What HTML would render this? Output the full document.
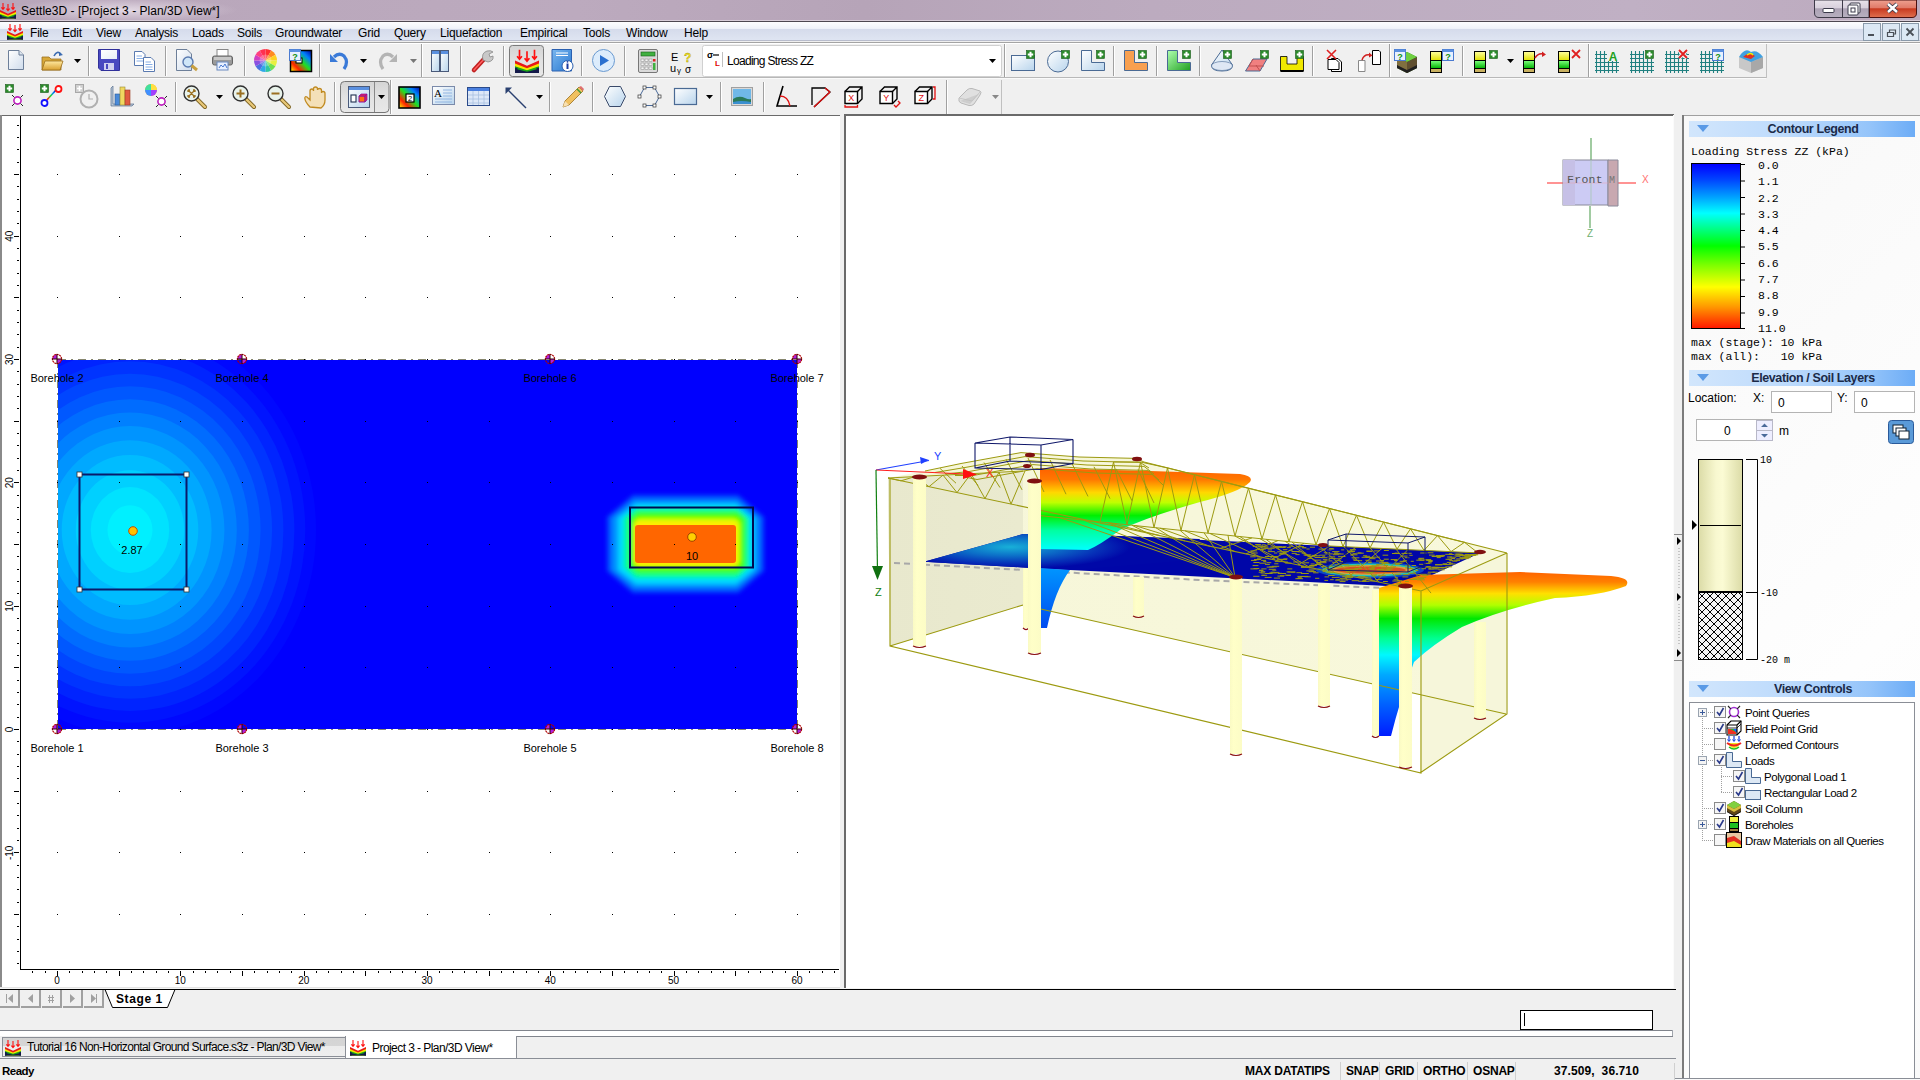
<!DOCTYPE html>
<html><head><meta charset="utf-8">
<style>
html,body{margin:0;padding:0;width:1920px;height:1080px;overflow:hidden;background:#f0f0f0;font-family:"Liberation Sans",sans-serif;font-size:12px;color:#000}
.a{position:absolute}
#title{left:0;top:0;width:1920px;height:21px;background:linear-gradient(90deg,#b8a6ba 0%,#bcaabe 30%,#b6a4b8 45%,#bcabbf 60%,#c0b0c4 85%,#bcaabe 100%)}
#menu{left:0;top:22px;width:1920px;height:18px;background:linear-gradient(#fdfdfe 0%,#f0f3f9 36%,#d5dbeb 38%,#dfe5f2 100%)}
.mi{position:absolute;top:26px;font-size:12px;letter-spacing:-0.2px;color:#000}
#tb{left:0;top:44px;width:1920px;height:71px;background:#f0f0f0}
.sep{position:absolute;width:1px;background:#a8a8a8;border-right:1px solid #fff}
.view{position:absolute;background:#fff;overflow:hidden}
svg text{font-family:"Liberation Sans",sans-serif}
.hdr{left:1689px;width:226px;height:16px;background:linear-gradient(90deg,#d2e6fc 0%,#bcdafc 45%,#94c4fa 80%,#6cacf6 100%);font-weight:bold;font-size:12.5px;color:#1b2a48;text-align:center;line-height:16px;text-indent:22px;letter-spacing:-0.4px}
.hdr::before{content:"";position:absolute;left:8px;top:4px;border-left:6px solid transparent;border-right:6px solid transparent;border-top:7px solid #5a9ae6}
.mono{font-family:"Liberation Mono",monospace;font-size:11.5px;line-height:14px;white-space:pre}
.mono2{font-family:"Liberation Mono",monospace;font-size:10px;line-height:12px}
.inp{background:#fff;border:1px solid #b4b4b4;box-sizing:border-box;font-size:12px}
.inp span{position:absolute;top:4px}
</style></head><body>
<!-- title bar -->
<div id="title" class="a"></div>
<div class="a" style="left:0;top:20px;width:1920px;height:1px;background:#d8cdd8"></div><div class="a" style="left:0;top:21px;width:1920px;height:1px;background:#4e4850"></div><div class="a" style="left:8px;top:0;width:230px;height:20px;background:radial-gradient(ellipse 50% 60% at 50% 50%,rgba(240,232,240,.75),rgba(240,232,240,0))"></div>
<div class="a" style="left:21px;top:4px;font-size:12px;letter-spacing:0.02px">Settle3D - [Project 3 - Plan/3D View*]</div>
<!-- menu -->
<div id="menu" class="a"></div>
<div class="a" style="left:0;top:40px;width:1920px;height:1px;background:#b8bccc"></div><div class="a" style="left:0;top:41px;width:1920px;height:1px;background:#efefef"></div><div class="a" style="left:0;top:42px;width:1920px;height:1px;background:#a4a4a4"></div><div class="a" style="left:0;top:43px;width:1920px;height:1px;background:#fff"></div>
<div class="mi" style="left:30px">File</div>
<div class="mi" style="left:62px">Edit</div>
<div class="mi" style="left:96px">View</div>
<div class="mi" style="left:135px">Analysis</div>
<div class="mi" style="left:192px">Loads</div>
<div class="mi" style="left:237px">Soils</div>
<div class="mi" style="left:275px">Groundwater</div>
<div class="mi" style="left:358px">Grid</div>
<div class="mi" style="left:394px">Query</div>
<div class="mi" style="left:440px">Liquefaction</div>
<div class="mi" style="left:520px">Empirical</div>
<div class="mi" style="left:583px">Tools</div>
<div class="mi" style="left:626px">Window</div>
<div class="mi" style="left:684px">Help</div>
<!-- toolbars -->
<div id="tb" class="a"></div>
<svg class="a" style="left:0;top:43px" width="1920" height="72" viewBox="0 43 1920 72">
<defs>
<linearGradient id="gpage" x1="0" y1="0" x2="1" y2="1"><stop offset="0" stop-color="#fff"/><stop offset="1" stop-color="#cfdcec"/></linearGradient>
<linearGradient id="gfold" x1="0" y1="0" x2="0" y2="1"><stop offset="0" stop-color="#ffe9a0"/><stop offset="1" stop-color="#d9a030"/></linearGradient>
<linearGradient id="gbtn" x1="0" y1="0" x2="0" y2="1"><stop offset="0" stop-color="#d4d4d4"/><stop offset="0.5" stop-color="#e2e2e2"/><stop offset="1" stop-color="#e8e8e8"/></linearGradient>
<linearGradient id="gcont" x1="0" y1="1" x2="1" y2="0"><stop offset="0" stop-color="#ffff00"/><stop offset="0.25" stop-color="#ff2000"/><stop offset="0.5" stop-color="#20e020"/><stop offset="0.75" stop-color="#0080ff"/><stop offset="1" stop-color="#0000a0"/></linearGradient>
<linearGradient id="gblue" x1="0" y1="0" x2="1" y2="1"><stop offset="0" stop-color="#7ab8f0"/><stop offset="1" stop-color="#2a78d0"/></linearGradient>
<linearGradient id="gyel" x1="0" y1="0" x2="0" y2="1"><stop offset="0" stop-color="#ffffa0"/><stop offset="1" stop-color="#e0e000"/></linearGradient>
<linearGradient id="ggrn" x1="0" y1="0" x2="0" y2="1"><stop offset="0" stop-color="#80ff80"/><stop offset="1" stop-color="#00b000"/></linearGradient>
<linearGradient id="glt" x1="0" y1="0" x2="1" y2="1"><stop offset="0" stop-color="#ffffff"/><stop offset="1" stop-color="#b8d4ec"/></linearGradient>
<linearGradient id="ggl" x1="0" y1="0" x2="1" y2="1"><stop offset="0" stop-color="#b0ffb0"/><stop offset="1" stop-color="#20a020"/></linearGradient>
<symbol id="s3d" viewBox="0 0 16 16">
<path d="M0 7.6L8 11.2L16 7.6V16H0Z" fill="#e81818"/>
<path d="M0 9.6L8 12.9L16 9.6V16H0Z" fill="#f4e800"/>
<path d="M0 11.5L8 14.2L16 11.5V16H0Z" fill="#18a818"/>
<path d="M0 13.2L8 15.2L16 13.2V16H0Z" fill="#141a4a"/>
<rect x="0" y="12.5" width="1.6" height="3.5" fill="#141a4a"/><rect x="14.4" y="12.5" width="1.6" height="3.5" fill="#141a4a"/>
<path d="M3 0.5V6.5M1.4 4.8L3 6.8L4.6 4.8M8 1.5V8M6.4 6.2L8 8.2L9.6 6.2M13 0.5V6.5M11.4 4.8L13 6.8L14.6 4.8" stroke="#ff1010" stroke-width="1.1" fill="none"/>
</symbol>
<symbol id="plus" viewBox="0 0 9 9"><rect x="0.5" y="0.5" width="8" height="8" fill="#2a8a2a" stroke="#1a5a1a" stroke-width="0.6"/><path d="M4.5 1.8V7.2M1.8 4.5H7.2" stroke="#fff" stroke-width="2"/></symbol>
<symbol id="qbadge" viewBox="0 0 12 12"><rect x="0.5" y="0.5" width="11" height="11" fill="#e8f0ff" stroke="#4a7ad0"/><rect x="0.5" y="0.5" width="11" height="2.5" fill="#5a90e0"/><text x="6" y="10.5" font-size="9" font-weight="bold" fill="#109010" text-anchor="middle">?</text></symbol>
<symbol id="bh" viewBox="0 0 12 22"><rect x="0.5" y="0.5" width="11" height="9" fill="url(#gyel)" stroke="#000"/><rect x="0.5" y="9.5" width="11" height="8" fill="url(#ggrn)" stroke="#000"/><rect x="0.5" y="17.5" width="11" height="4" fill="#c8b060" stroke="#000"/></symbol>
<pattern id="grid" width="4" height="4" patternUnits="userSpaceOnUse"><path d="M1.5 0V4M0 1.5H4" stroke="#208080" stroke-width="1.1"/></pattern>
</defs>
<rect x="0" y="77" width="1766" height="1" fill="#b8b8b8"/><rect x="0" y="78" width="1766" height="1" fill="#fafafa"/>
<g transform="translate(8,50)"><path d="M0.5 0.5H11L15.5 5V19.5H0.5Z" fill="url(#gpage)" stroke="#6d7f99"/><path d="M11 0.5V5H15.5" fill="#dde6f0" stroke="#6d7f99"/></g>
<g transform="translate(41,51)"><path d="M1 6H8L10 8H20V19H1Z" fill="#d8a838" stroke="#9a7020" stroke-width="0.8"/><path d="M1 19L4 10H22L19 19Z" fill="url(#gfold)" stroke="#9a7020" stroke-width="0.8"/><path d="M13 5Q16 -1 20 3" stroke="#3a6ab0" stroke-width="1.6" fill="none"/><path d="M18 1L22 4L18 5Z" fill="#3a6ab0"/></g>
<path d="M74 59h7l-3.5 4z" fill="#000"/>
<rect x="88" y="46" width="1" height="30" fill="#a0a0a0"/><rect x="89" y="46" width="1" height="30" fill="#fff"/>
<g transform="translate(98,49)"><path d="M0.5 0.5H21.5V21.5H3L0.5 19Z" fill="#4848c0" stroke="#30309a"/><rect x="3" y="1" width="16" height="9" fill="#fff"/><rect x="3" y="1" width="16" height="9" fill="url(#gpage)" opacity=".5"/><rect x="6" y="14" width="10" height="7" fill="#d0d0f0"/><rect x="8" y="15" width="2" height="5" fill="#4848c0"/></g>
<g transform="translate(134,51)"><path d="M0.5 0.5H8L11 3.5V14.5H0.5Z" fill="#fff" stroke="#5a7ab0"/><path d="M9.5 6.5H17L20.5 10V20.5H9.5Z" fill="#fff" stroke="#5a7ab0"/><path d="M2.5 5H8M2.5 7.5H9M2.5 10H9M11.5 11H17M11.5 13.5H18.5M11.5 16H18.5M11.5 18.5H18.5" stroke="#6a9ae0" stroke-width="0.8"/></g>
<rect x="165" y="46" width="1" height="30" fill="#a0a0a0"/><rect x="166" y="46" width="1" height="30" fill="#fff"/>
<g transform="translate(176,49)"><path d="M0.5 0.5H11L15.5 5V21.5H0.5Z" fill="url(#gpage)" stroke="#6d7f99"/><circle cx="12" cy="13" r="5" fill="#cfe6f8" stroke="#5a7ab0" stroke-width="1.4"/><path d="M15.5 16.5L21 21" stroke="#c8a040" stroke-width="3"/></g>
<g transform="translate(212,49)"><rect x="5" y="0.5" width="11" height="7" fill="#fff" stroke="#888"/><rect x="0.5" y="7" width="20" height="9" rx="2" fill="#9a9a9a" stroke="#666"/><rect x="2" y="8" width="17" height="3" fill="#c8c8c8"/><rect x="5" y="13" width="11" height="8" fill="#e8f0ff" stroke="#6a8ac0"/><path d="M7 19l2-3 2 2 2-3 2 4" stroke="#4a7ad0" fill="none"/></g>
<rect x="244" y="46" width="1" height="30" fill="#a0a0a0"/><rect x="245" y="46" width="1" height="30" fill="#fff"/>
<g transform="translate(254,49)"><path d="M11.5 11.5L11.50 0.00A11.5 11.5 0 0 1 17.25 1.54Z" fill="#ff3030"/><path d="M11.5 11.5L17.25 1.54A11.5 11.5 0 0 1 21.46 5.75Z" fill="#ff8a20"/><path d="M11.5 11.5L21.46 5.75A11.5 11.5 0 0 1 23.00 11.50Z" fill="#ffd020"/><path d="M11.5 11.5L23.00 11.50A11.5 11.5 0 0 1 21.46 17.25Z" fill="#e8f040"/><path d="M11.5 11.5L21.46 17.25A11.5 11.5 0 0 1 17.25 21.46Z" fill="#70e050"/><path d="M11.5 11.5L17.25 21.46A11.5 11.5 0 0 1 11.50 23.00Z" fill="#30c8a0"/><path d="M11.5 11.5L11.50 23.00A11.5 11.5 0 0 1 5.75 21.46Z" fill="#30a8e8"/><path d="M11.5 11.5L5.75 21.46A11.5 11.5 0 0 1 1.54 17.25Z" fill="#4a70e0"/><path d="M11.5 11.5L1.54 17.25A11.5 11.5 0 0 1 0.00 11.50Z" fill="#8a50e0"/><path d="M11.5 11.5L0.00 11.50A11.5 11.5 0 0 1 1.54 5.75Z" fill="#d040c0"/><path d="M11.5 11.5L1.54 5.75A11.5 11.5 0 0 1 5.75 1.54Z" fill="#ff4080"/><path d="M11.5 11.5L5.75 1.54A11.5 11.5 0 0 1 11.50 0.00Z" fill="#ff3050"/><circle cx="11.5" cy="11.5" r="11" fill="url(#rw)" opacity="0"/><circle cx="11.5" cy="11.5" r="6" fill="#fff" opacity=".25"/></g>
<g transform="translate(289,49)"><rect x="1.5" y="1.5" width="21" height="21" fill="url(#gcont)" stroke="#000" stroke-width="1.5"/><rect x="7" y="9" width="6" height="5" fill="#fff" stroke="#000"/><use href="#qbadge" x="0" y="0" width="12" height="12"/></g>
<rect x="319" y="44" width="1" height="33" fill="#a0a0a0"/><rect x="320" y="44" width="1" height="33" fill="#fff"/>
<g transform="translate(330,52)"><path d="M14 17Q19 10 14 4Q9 0 4 5" stroke="#3a7ad8" stroke-width="3.2" fill="none"/><path d="M0 2V10H8Z" fill="#3a7ad8"/></g>
<path d="M360 59h7l-3.5 4z" fill="#000"/>
<g transform="translate(381,52)"><path d="M2 17Q-3 10 2 4Q7 0 12 5" stroke="#b4b4b4" stroke-width="3.2" fill="none"/><path d="M16 2V10H8Z" fill="#b4b4b4"/></g>
<path d="M410 59h7l-3.5 4z" fill="#777"/>
<rect x="421" y="44" width="1" height="33" fill="#a0a0a0"/><rect x="422" y="44" width="1" height="33" fill="#fff"/>
<g transform="translate(431,50)"><rect x="0.5" y="0.5" width="8" height="21" fill="url(#glt)" stroke="#4a5a7a"/><rect x="9.5" y="0.5" width="8" height="21" fill="url(#glt)" stroke="#4a5a7a"/><rect x="1" y="1" width="7" height="3" fill="#5a90e0"/><rect x="10" y="1" width="7" height="3" fill="#5a90e0"/></g>
<rect x="460" y="46" width="1" height="30" fill="#a0a0a0"/><rect x="461" y="46" width="1" height="30" fill="#fff"/>
<g transform="translate(472,49)"><path d="M2 21L13 9" stroke="#c02020" stroke-width="4.5" stroke-linecap="round"/><path d="M2 21L13 9" stroke="#ff6060" stroke-width="1.5" stroke-linecap="round"/><path d="M11 11Q9 4 15 2Q19 1 21 3L17 5L18 8L21 7Q22 12 16 13Z" fill="#c8c8c8" stroke="#888" stroke-width="0.8"/></g>
<rect x="503" y="46" width="1" height="30" fill="#a0a0a0"/><rect x="504" y="46" width="1" height="30" fill="#fff"/>
<rect x="509.5" y="45.5" width="34" height="31" rx="3" fill="url(#gbtn)" stroke="#7a7a7a"/>
<use href="#s3d" x="515" y="49" width="24" height="24"/>
<g transform="translate(551,49)"><path d="M1 0.5H20.5V22H1Z" fill="url(#gblue)" stroke="#2a60b0"/><path d="M5 4H17M5 6.5H17" stroke="#fff" stroke-width="1"/><circle cx="16.5" cy="17" r="5.5" fill="#fff" stroke="#2a60b0"/><path d="M16.5 14.5V20" stroke="#1a3aa0" stroke-width="2"/><circle cx="16.5" cy="12.8" r="0.9" fill="#1a3aa0"/></g>
<rect x="581" y="46" width="1" height="30" fill="#a0a0a0"/><rect x="582" y="46" width="1" height="30" fill="#fff"/>
<g transform="translate(592,49)"><circle cx="11.5" cy="11.5" r="11" fill="#dcecfc" stroke="#6a9ad0"/><path d="M8 6V17L17 11.5Z" fill="#2a70d0"/></g>
<rect x="624" y="46" width="1" height="30" fill="#a0a0a0"/><rect x="625" y="46" width="1" height="30" fill="#fff"/>
<g transform="translate(638,49)"><rect x="0.5" y="0.5" width="19" height="23" rx="1.5" fill="#dadada" stroke="#777"/><rect x="3" y="3" width="14" height="4" fill="#40b040" stroke="#1a601a" stroke-width=".6"/><g fill="#f4f4f4" stroke="#888" stroke-width=".5"><rect x="3" y="10" width="3" height="2.5"/><rect x="7" y="10" width="3" height="2.5"/><rect x="11" y="10" width="3" height="2.5"/><rect x="3" y="14" width="3" height="2.5"/><rect x="7" y="14" width="3" height="2.5"/><rect x="11" y="14" width="3" height="2.5"/><rect x="3" y="18" width="3" height="2.5"/><rect x="7" y="18" width="3" height="2.5"/><rect x="11" y="18" width="3" height="2.5"/></g><rect x="15" y="10" width="2.5" height="2.5" fill="#e02020"/><rect x="15" y="14" width="2.5" height="7" fill="#40b040"/></g>
<text x="671" y="61" font-size="11" fill="#000">E</text><text x="670" y="72" font-size="11" fill="#000">u</text><text x="677" y="73" font-size="8" fill="#000">γ</text><text x="684" y="62" font-size="12" font-weight="bold" fill="#f0e020" stroke="#a09000" stroke-width=".3">?</text><text x="685" y="73" font-size="10" fill="#000">σ</text>
<rect x="702.5" y="45.5" width="299" height="31" rx="2" fill="#fff" stroke="#d0d0d0"/>
<text x="707" y="58" font-size="9" font-weight="bold" fill="#000">σ</text><path d="M713 55h6" stroke="#000" stroke-width="1.2"/><text x="715" y="66" font-size="8" font-weight="bold" fill="#e00000">L</text><rect x="722" y="52" width="1" height="15" fill="#c0c0c0"/>
<text x="727" y="65" font-size="12" fill="#000" letter-spacing="-0.7">Loading Stress ZZ</text>
<path d="M989 59h7l-3.5 4z" fill="#000"/>
<rect x="1004" y="44" width="1" height="33" fill="#a0a0a0"/><rect x="1005" y="44" width="1" height="33" fill="#fff"/>
<g transform="translate(1011,50)"><rect x="0.5" y="5.5" width="23" height="15" fill="url(#glt)" stroke="#4a6a94"/></g>
<use href="#plus" x="1026" y="50" width="9" height="9"/>
<g transform="translate(1047,50)"><circle cx="11" cy="11.5" r="10.5" fill="url(#glt)" stroke="#4a6a94"/></g>
<use href="#plus" x="1061" y="50" width="9" height="9"/>
<g transform="translate(1081,50)"><path d="M0.5 0.5H10.5V12.5H23.5V20.5H0.5Z" fill="url(#glt)" stroke="#4a6a94"/></g>
<use href="#plus" x="1096" y="50" width="9" height="9"/>
<rect x="1113" y="46" width="1" height="30" fill="#a0a0a0"/><rect x="1114" y="46" width="1" height="30" fill="#fff"/>
<g transform="translate(1124,50)"><path d="M0.5 0.5H10.5V12.5H23.5V20.5H0.5Z" fill="#f8a050" stroke="#4a6a94"/></g>
<use href="#plus" x="1138" y="50" width="9" height="9"/>
<rect x="1156" y="46" width="1" height="30" fill="#a0a0a0"/><rect x="1157" y="46" width="1" height="30" fill="#fff"/>
<g transform="translate(1167,50)"><path d="M0.5 0.5H10.5V12.5H23.5V20.5H0.5Z" fill="url(#ggl)" stroke="#4a6a94"/></g>
<use href="#plus" x="1182" y="50" width="9" height="9"/>
<rect x="1199" y="46" width="1" height="30" fill="#a0a0a0"/><rect x="1200" y="46" width="1" height="30" fill="#fff"/>
<g transform="translate(1211,50)"><path d="M11 0L0.5 15Q0 21 11 21Q22 21 21.5 15Z" fill="url(#glt)" stroke="#4a6a94"/><ellipse cx="11" cy="16" rx="10.5" ry="4.5" fill="#dfe8f4" stroke="#4a6a94" stroke-width=".6"/></g>
<use href="#plus" x="1223" y="50" width="9" height="9"/>
<g transform="translate(1245,50)"><path d="M0.5 21L8 9H22L15 21Z" fill="#f08080" stroke="#4a6a94"/><path d="M8 9L4 16H19M11 15L15 21" stroke="#c05050" fill="none"/></g>
<use href="#plus" x="1260" y="50" width="9" height="9"/>
<g transform="translate(1280,50)"><path d="M0.5 6.5H7V14H17V6.5H23.5V21H0.5Z" fill="#f0e800" stroke="#000" stroke-width=".8"/><rect x="0.5" y="20" width="23" height="2" fill="#000"/></g>
<use href="#plus" x="1295" y="50" width="9" height="9"/>
<rect x="1312" y="46" width="1" height="30" fill="#a0a0a0"/><rect x="1313" y="46" width="1" height="30" fill="#fff"/>
<g transform="translate(1327,50)"><path d="M4.5 8.5H11L14.5 12V21.5H4.5Z" fill="#fff" stroke="#000"/><path d="M1 9.5H9L12 12.5V19.5H1Z" fill="#fff" stroke="#000"/><path d="M0 0L9 9M9 0L0 9" stroke="#e02020" stroke-width="1.6"/></g>
<g transform="translate(1358,50)"><path d="M0.5 10.5H7V21.5H0.5Z" fill="#fff" stroke="#888"/><path d="M14.5 0.5H21L22.5 2V14.5H14.5Z" fill="#fff" stroke="#000"/><path d="M4 10Q6 4 12 5" stroke="#d02020" stroke-width="1.5" fill="none"/><path d="M11 2.5L14.5 5.5L11 7.5Z" fill="#d02020"/></g>
<rect x="1389" y="44" width="1" height="33" fill="#a0a0a0"/><rect x="1390" y="44" width="1" height="33" fill="#fff"/>
<g transform="translate(1394,49)"><path d="M3 8L13 3L23 8V19L13 24L3 19Z" fill="#208020"/><path d="M3 8L13 13L23 8L13 3Z" fill="#70d040"/><path d="M3 8V19L13 24V13Z" fill="#807040"/><path d="M13 13V24L23 19V8Z" fill="#605030"/><path d="M3 16L13 21L23 16V19L13 24L3 19Z" fill="#202020"/><use href="#qbadge" x="0" y="0" width="12" height="12"/></g>
<g transform="translate(1430,49)"><use href="#bh" x="0" y="2" width="12" height="22"/><use href="#qbadge" x="12" y="0" width="12" height="12"/></g>
<rect x="1462" y="46" width="1" height="30" fill="#a0a0a0"/><rect x="1463" y="46" width="1" height="30" fill="#fff"/>
<g transform="translate(1474,49)"><use href="#bh" x="0" y="2" width="12" height="22"/></g>
<use href="#plus" x="1489" y="50" width="9" height="9"/>
<path d="M1507 59h7l-3.5 4z" fill="#000"/>
<g transform="translate(1523,49)"><use href="#bh" x="0" y="2" width="12" height="22"/><path d="M12 9Q15 4 20 5" stroke="#d02020" stroke-width="1.5" fill="none"/><path d="M19 2.5L23 5.5L19 8Z" fill="#d02020"/></g>
<g transform="translate(1558,49)"><use href="#bh" x="0" y="2" width="12" height="22"/><path d="M14 1L22 9M22 1L14 9" stroke="#e02020" stroke-width="1.8"/></g>
<rect x="1588" y="44" width="1" height="33" fill="#a0a0a0"/><rect x="1589" y="44" width="1" height="33" fill="#fff"/>
<g transform="translate(1595,49)"><rect x="0" y="2" width="24" height="22" fill="url(#grid)"/><rect x="12" y="0" width="12" height="12" fill="#f0f0f0"/><text x="18" y="11.5" font-size="12" font-weight="bold" fill="#20a020" text-anchor="middle">A</text></g>
<g transform="translate(1630,49)"><rect x="0" y="2" width="24" height="22" fill="url(#grid)"/><rect x="14" y="0" width="10" height="10" fill="#f0f0f0"/></g>
<use href="#plus" x="1645" y="50" width="9" height="9"/>
<g transform="translate(1665,49)"><rect x="0" y="2" width="24" height="22" fill="url(#grid)"/><path d="M14 1L22 9M22 1L14 9" stroke="#f0f0f0" stroke-width="4"/><path d="M14 1L22 9M22 1L14 9" stroke="#e02020" stroke-width="1.8"/></g>
<g transform="translate(1700,49)"><rect x="0" y="2" width="24" height="22" fill="url(#grid)"/><use href="#qbadge" x="12" y="0" width="12" height="12"/></g>
<g transform="translate(1737,49)"><path d="M2 8L14 3L26 8V19L14 24L2 19Z" fill="#c8c8c8"/><path d="M14 13V24L26 19V8Z" fill="#a8a8a8"/><path d="M2 8Q8 -2 14 3Q20 0 26 8L14 13Z" fill="#40a0e0"/><path d="M6 8Q12 2 18 7L14 10Z" fill="#e03020"/><path d="M10 6Q14 3 16 6" stroke="#f0f000" stroke-width="1.5" fill="none"/></g>
<rect x="1766" y="44" width="1" height="34" fill="#c0c0c0"/>
<g transform="translate(5,84)"><use href="#plus" x="0" y="0" width="9" height="9"/><g transform="translate(8,12)"><circle cx="4.5" cy="4.5" r="3.6" fill="#fff" stroke="#c020c0" stroke-width="1.6"/><path d="M-1 -1L1.5 1.5M10 -1L7.5 1.5M-1 10L1.5 7.5M10 10L7.5 7.5" stroke="#222" stroke-width="1"/></g></g>
<g transform="translate(40,84)"><use href="#plus" x="0" y="0" width="9" height="9"/><path d="M5 18L16 6" stroke="url(#gcont)" stroke-width="1.6"/><circle cx="4.5" cy="19" r="3" fill="#fff" stroke="#1010ff" stroke-width="1.8"/><circle cx="18.5" cy="5" r="3" fill="#fff" stroke="#ff1010" stroke-width="1.8"/></g>
<g transform="translate(75,84)"><rect x="0.5" y="0.5" width="8" height="8" fill="#d0d0d0" stroke="#a8a8a8"/><path d="M4.5 2V7M2 4.5H7" stroke="#fff" stroke-width="1.6"/><circle cx="14" cy="15" r="8.5" fill="#f0f0f0" stroke="#b0b0b0" stroke-width="2"/><path d="M14 10V15H18" stroke="#b0b0b0" stroke-width="1.2" fill="none"/></g>
<g transform="translate(110,84)"><path d="M1 22V4L3 2V20H24L22 22Z" fill="#b8c8d8" stroke="#5a7090" stroke-width=".7"/><rect x="5" y="10" width="5" height="11" fill="#4a8ad8" stroke="#2a5a9a" stroke-width=".6"/><rect x="10" y="3" width="5" height="18" fill="#f0d860" stroke="#9a8a30" stroke-width=".6"/><rect x="15" y="6" width="5" height="15" fill="#e05a40" stroke="#9a3a20" stroke-width=".6"/></g>
<g transform="translate(145,84)"><circle cx="6" cy="6" r="6" fill="#ffb040"/><path d="M6 6L12 6A6 6 0 0 1 6 12Z" fill="#a040ff"/><path d="M6 6L0 6A6 6 0 0 1 6 0Z" fill="#40e0a0"/><path d="M6 6L6 0A6 6 0 0 1 12 6Z" fill="#ffe040"/><path d="M6 6L6 12A6 6 0 0 1 0 6Z" fill="#4090ff"/><g transform="translate(12,13)"><circle cx="4.5" cy="4.5" r="3.6" fill="#fff" stroke="#c020c0" stroke-width="1.6"/><path d="M-1 -1L1.5 1.5M10 -1L7.5 1.5M-1 10L1.5 7.5M10 10L7.5 7.5" stroke="#222" stroke-width="1"/></g></g>
<rect x="175" y="82" width="1" height="30" fill="#a0a0a0"/><rect x="176" y="82" width="1" height="30" fill="#fff"/>
<g transform="translate(183,85)"><path d="M14 14L22 22" stroke="#7a6020" stroke-width="4" stroke-linecap="round"/><path d="M14 14L22 22" stroke="#e8c878" stroke-width="2.4" stroke-linecap="round"/><circle cx="8.5" cy="8.5" r="7.5" fill="#e8f2ea" stroke="#303030" stroke-width="1.4"/><path d="M5 5l2 0M5 5l0 2M12 5l-2 0M12 5l0 2M5 12l2 0M5 12l0-2M12 12l-2 0M12 12l0-2M5.5 5.5L11.5 11.5M11.5 5.5L5.5 11.5" stroke="#9a7020" stroke-width="1.3"/></g>
<path d="M216 95h7l-3.5 4z" fill="#000"/>
<g transform="translate(232,85)"><path d="M14 14L22 22" stroke="#7a6020" stroke-width="4" stroke-linecap="round"/><path d="M14 14L22 22" stroke="#e8c878" stroke-width="2.4" stroke-linecap="round"/><circle cx="8.5" cy="8.5" r="7.5" fill="#e8f2ea" stroke="#303030" stroke-width="1.4"/><path d="M8.5 4.5V12.5M4.5 8.5H12.5" stroke="#9a7020" stroke-width="2"/></g>
<g transform="translate(267,85)"><path d="M14 14L22 22" stroke="#7a6020" stroke-width="4" stroke-linecap="round"/><path d="M14 14L22 22" stroke="#e8c878" stroke-width="2.4" stroke-linecap="round"/><circle cx="8.5" cy="8.5" r="7.5" fill="#e8f2ea" stroke="#303030" stroke-width="1.4"/><path d="M4.5 8.5H12.5" stroke="#9a7020" stroke-width="2"/></g>
<g transform="translate(304,86)"><path d="M6 21Q1 16 0.8 12Q1 10 3 11L6 14V5Q6 3 8 3Q9.5 3 9.5 5V3Q9.5 1 11.5 1Q13.5 1 13.5 3V4Q13.5 2.5 15.5 2.5Q17.5 2.5 17.5 4.5V7Q17.5 5.5 19 5.5Q21 5.5 21 7.5V14Q21 19 17 22Z" fill="#f4e0b8" stroke="#c08a20" stroke-width="1.3"/></g>
<rect x="334" y="82" width="1" height="30" fill="#a0a0a0"/><rect x="335" y="82" width="1" height="30" fill="#fff"/>
<rect x="340.5" y="81.5" width="48.5" height="31" rx="4" fill="url(#gbtn)" stroke="#767676"/><rect x="374" y="82" width="1" height="30" fill="#888"/>
<g transform="translate(348,86)"><rect x="0.5" y="0.5" width="21" height="21" fill="url(#glt)" stroke="#4a5a7a"/><rect x="1" y="1" width="20" height="3" fill="#5a90e0"/><rect x="3" y="9" width="5" height="7" fill="#fff" stroke="#203050" stroke-width="1.1"/><path d="M11 10H17V16H11Z" fill="#ff7010" stroke="#8a10a0" stroke-width="1"/><path d="M11 10L13 8H19L17 10ZM17 10L19 8V14L17 16Z" fill="#e02060" stroke="#8a10a0" stroke-width=".7"/></g>
<path d="M378 95h7l-3.5 4z" fill="#000"/>
<rect x="390" y="80" width="1" height="34" fill="#a0a0a0"/><rect x="391" y="80" width="1" height="34" fill="#fff"/>
<g transform="translate(398,86)"><rect x="1" y="1" width="21" height="21" fill="url(#gcont)" stroke="#000" stroke-width="1.6"/><rect x="8" y="8" width="8" height="8" fill="#fff" stroke="#000" stroke-width="1.2"/><text x="12" y="15" font-size="7.5" text-anchor="middle" fill="#000">2</text></g>
<g transform="translate(432,86)"><rect x="0.5" y="0.5" width="22" height="18" fill="url(#glt)" stroke="#7a8aaa"/><text x="2" y="11" font-size="11" style="font-family:Liberation Serif" fill="#000">A</text><path d="M11 4H20M11 7H20M11 10H20M3 13H20M3 16H20" stroke="#8ab0e0" stroke-width=".9"/></g>
<g transform="translate(467,87)"><rect x="0.5" y="0.5" width="22" height="18" fill="#dde8f8" stroke="#2a4a8a"/><rect x="1" y="1" width="21" height="3" fill="#4a80e0"/><path d="M1 8H22M1 12H22M1 16H22M6 4V18M11.5 4V18M17 4V18" stroke="#a8c0e0" stroke-width=".8"/></g>
<g transform="translate(505,87)"><path d="M21 21L2 2" stroke="#2a4070" stroke-width="1.4"/><path d="M0.5 0.5H7L0.5 7Z" fill="#2a4070"/></g>
<path d="M536 95h7l-3.5 4z" fill="#000"/>
<rect x="549" y="82" width="1" height="30" fill="#a0a0a0"/><rect x="550" y="82" width="1" height="30" fill="#fff"/>
<g transform="translate(561,85)"><path d="M2 22L4 16L18 2L22 6L8 20Z" fill="#f0c060" stroke="#9a7020" stroke-width=".8"/><path d="M2 22L4 16L8 20Z" fill="#f8e0b0"/><path d="M16 4L20 8" stroke="#3a9a3a" stroke-width="1.5"/><path d="M18 2L22 6L23 4L20 1Z" fill="#e07070"/></g>
<rect x="592" y="82" width="1" height="30" fill="#a0a0a0"/><rect x="593" y="82" width="1" height="30" fill="#fff"/>
<g transform="translate(604,86)"><path d="M5.5 0.5H16.5L21.5 10.5L16.5 20.5H5.5L0.5 10.5Z" fill="url(#glt)" stroke="#3a4a6a"/></g>
<g transform="translate(639,86)"><path d="M5.5 1.5H15.5L20.5 10.5L15.5 19.5H5.5M0.5 10.5L5.5 1.5" stroke="#4a6a9a" fill="none"/><g fill="#fff" stroke="#333" stroke-width=".7"><rect x="4" y="0" width="3" height="3"/><rect x="14" y="0" width="3" height="3"/><rect x="19" y="9" width="3" height="3"/><rect x="14" y="18" width="3" height="3"/><rect x="4" y="18" width="3" height="3"/><rect x="-1" y="9" width="3" height="3"/></g></g>
<g transform="translate(674,88)"><rect x="0.5" y="0.5" width="22" height="16" fill="url(#glt)" stroke="#4a6a94" stroke-width="1.2"/></g>
<path d="M706 95h7l-3.5 4z" fill="#000"/>
<rect x="720" y="82" width="1" height="30" fill="#a0a0a0"/><rect x="721" y="82" width="1" height="30" fill="#fff"/>
<g transform="translate(731,87)"><rect x="0.5" y="0.5" width="21" height="18" fill="#d8d8d8" stroke="#a0a0a0"/><rect x="2" y="2" width="18" height="15" fill="#70b8e8"/><path d="M2 12Q8 8 14 11Q18 13 20 12V17H2Z" fill="#2a7a5a"/><path d="M2 15Q10 13 20 15V17H2Z" fill="#3a90d0"/></g>
<rect x="763" y="82" width="1" height="30" fill="#a0a0a0"/><rect x="764" y="82" width="1" height="30" fill="#fff"/>
<g transform="translate(775,85)"><path d="M8 1L2 21H22" stroke="#000" stroke-width="1.6" fill="none"/><path d="M5 11Q13 11 15 21" stroke="#e01010" stroke-width="1.3" fill="none"/></g>
<g transform="translate(811,87)"><path d="M1 18V1H14L19 5L3 20" stroke="#000" stroke-width="1.3" fill="none"/><path d="M3 20L19 5" stroke="#e01010" stroke-width="1.3"/><path d="M14 1L19 5" stroke="#e01010" stroke-width="1.3"/></g>
<g transform="translate(844,86)"><path d="M1 5.5H13.5V17.5H1Z" fill="#fff" stroke="#000" stroke-width="1.4"/><path d="M1 5.5L5.5 1H18V13L13.5 17.5M13.5 5.5L18 1" stroke="#000" stroke-width="1.4" fill="none"/><text x="7.3" y="15" font-size="9" text-anchor="middle" fill="#e01010">X</text><path d="M1 19V21H13.5V19" stroke="#e01010" stroke-width="1.3" fill="none"/></g>
<g transform="translate(879,86)"><path d="M1 5.5H13.5V17.5H1Z" fill="#fff" stroke="#000" stroke-width="1.4"/><path d="M1 5.5L5.5 1H18V13L13.5 17.5M13.5 5.5L18 1" stroke="#000" stroke-width="1.4" fill="none"/><text x="7.3" y="15" font-size="9" text-anchor="middle" fill="#e01010">Y</text><path d="M15 19L17 21L21 17L19 15" stroke="#e01010" stroke-width="1.3" fill="none"/></g>
<g transform="translate(914,86)"><path d="M1 5.5H13.5V17.5H1Z" fill="#fff" stroke="#000" stroke-width="1.4"/><path d="M1 5.5L5.5 1H18V13L13.5 17.5M13.5 5.5L18 1" stroke="#000" stroke-width="1.4" fill="none"/><text x="7.3" y="15" font-size="9" text-anchor="middle" fill="#e01010">Z</text><path d="M19 1H21V13H19" stroke="#e01010" stroke-width="1.3" fill="none"/></g>
<rect x="946" y="80" width="1" height="34" fill="#a0a0a0"/><rect x="947" y="80" width="1" height="34" fill="#fff"/>
<g transform="translate(958,88)"><path d="M1 10L9 2Q11 0 14 0.5L22 3Q24 4 22 7L16 16Q14 18 11 17.5L3 15Q0 14 1 10Z" fill="#e0e0e0" stroke="#b8b8b8"/><path d="M1 10L14 13L22 4" stroke="#c8c8c8" fill="none"/><path d="M2 13L12 16L21 6" fill="#c0c0c0" opacity=".6"/></g>
<path d="M992 95h7l-3.5 4z" fill="#888"/>
<rect x="1001" y="80" width="1" height="34" fill="#c0c0c0"/>
</svg>

<!-- plan view -->
<svg class="a" style="left:0px;top:115px" width="840" height="873" viewBox="0 115 840 873">
<defs><clipPath id="rc"><rect x="58" y="360" width="739" height="369"/></clipPath><filter id="bl" x="-20%" y="-20%" width="140%" height="140%"><feGaussianBlur stdDeviation="2.2"/></filter></defs>
<rect x="0" y="115" width="840" height="873" fill="#fff"/>
<g clip-path="url(#rc)">
<rect x="58" y="360" width="739" height="369" fill="#0000fe"/>
<ellipse cx="130" cy="530" rx="186.0" ry="204.6" fill="#0008ff"/>
<ellipse cx="130" cy="530" rx="175.3" ry="192.8" fill="#0014ff"/>
<ellipse cx="130" cy="530" rx="164.4" ry="180.9" fill="#0024ff"/>
<ellipse cx="130" cy="530" rx="153.4" ry="168.7" fill="#0034ff"/>
<ellipse cx="130" cy="530" rx="142.1" ry="156.3" fill="#0046ff"/>
<ellipse cx="130" cy="530" rx="130.6" ry="143.7" fill="#0058ff"/>
<ellipse cx="130" cy="530" rx="118.9" ry="130.8" fill="#006cff"/>
<ellipse cx="130" cy="530" rx="106.8" ry="117.5" fill="#0080ff"/>
<ellipse cx="130" cy="530" rx="94.4" ry="103.9" fill="#0094ff"/>
<ellipse cx="130" cy="530" rx="81.6" ry="89.8" fill="#00a8ff"/>
<ellipse cx="130" cy="530" rx="68.3" ry="75.1" fill="#00bcff"/>
<ellipse cx="130" cy="530" rx="54.2" ry="59.7" fill="#00d0ff"/>
<ellipse cx="130" cy="530" rx="39.2" ry="43.1" fill="#00e2ff"/>
<ellipse cx="130" cy="530" rx="22.5" ry="24.8" fill="#00f0ff"/>
<g filter="url(#bl)">
<polygon points="633.0,495.0 738.0,495.0 764.0,517.0 764.0,571.0 738.0,593.0 633.0,593.0 607.0,571.0 607.0,517.0" fill="#0050ff"/>
<polygon points="634.0,500.0 737.0,500.0 759.0,518.0 759.0,570.0 737.0,588.0 634.0,588.0 612.0,570.0 612.0,518.0" fill="#0090ff"/>
<polygon points="636.0,504.0 736.0,504.0 754.0,518.0 754.0,570.0 736.0,584.0 636.0,584.0 618.0,570.0 618.0,518.0" fill="#00d8ff"/>
<polygon points="636.0,508.0 737.0,508.0 749.0,518.0 749.0,568.0 737.0,578.0 636.0,578.0 624.0,568.0 624.0,518.0" fill="#00ff90"/>
<polygon points="638.0,512.0 737.0,512.0 745.0,518.0 745.0,567.0 737.0,573.0 638.0,573.0 630.0,567.0 630.0,518.0" fill="#40ff00"/>
<rect x="634" y="518" width="106" height="49" rx="6" fill="#c8ff00"/>
<rect x="634" y="521" width="104" height="45" rx="5" fill="#ffee00"/>
</g>
<rect x="635" y="525" width="101" height="38" rx="3" fill="#ff6600"/>
</g>
<g stroke="#86866e" stroke-width="1" stroke-dasharray="8,5,2,5" fill="none">
<line x1="58" y1="359.5" x2="797" y2="359.5"/><line x1="58" y1="729.5" x2="797" y2="729.5"/>
<line x1="57.5" y1="360" x2="57.5" y2="729"/><line x1="797.5" y1="360" x2="797.5" y2="729"/>
</g>
<path d="M57 914h1v1h-1zM57 852h1v1h-1zM57 791h1v1h-1zM57 729h1v1h-1zM57 667h1v1h-1zM57 606h1v1h-1zM57 544h1v1h-1zM57 482h1v1h-1zM57 421h1v1h-1zM57 359h1v1h-1zM57 297h1v1h-1zM57 236h1v1h-1zM57 174h1v1h-1zM119 914h1v1h-1zM119 852h1v1h-1zM119 791h1v1h-1zM119 729h1v1h-1zM119 667h1v1h-1zM119 606h1v1h-1zM119 544h1v1h-1zM119 482h1v1h-1zM119 421h1v1h-1zM119 359h1v1h-1zM119 297h1v1h-1zM119 236h1v1h-1zM119 174h1v1h-1zM180 914h1v1h-1zM180 852h1v1h-1zM180 791h1v1h-1zM180 729h1v1h-1zM180 667h1v1h-1zM180 606h1v1h-1zM180 544h1v1h-1zM180 482h1v1h-1zM180 421h1v1h-1zM180 359h1v1h-1zM180 297h1v1h-1zM180 236h1v1h-1zM180 174h1v1h-1zM242 914h1v1h-1zM242 852h1v1h-1zM242 791h1v1h-1zM242 729h1v1h-1zM242 667h1v1h-1zM242 606h1v1h-1zM242 544h1v1h-1zM242 482h1v1h-1zM242 421h1v1h-1zM242 359h1v1h-1zM242 297h1v1h-1zM242 236h1v1h-1zM242 174h1v1h-1zM304 914h1v1h-1zM304 852h1v1h-1zM304 791h1v1h-1zM304 729h1v1h-1zM304 667h1v1h-1zM304 606h1v1h-1zM304 544h1v1h-1zM304 482h1v1h-1zM304 421h1v1h-1zM304 359h1v1h-1zM304 297h1v1h-1zM304 236h1v1h-1zM304 174h1v1h-1zM365 914h1v1h-1zM365 852h1v1h-1zM365 791h1v1h-1zM365 729h1v1h-1zM365 667h1v1h-1zM365 606h1v1h-1zM365 544h1v1h-1zM365 482h1v1h-1zM365 421h1v1h-1zM365 359h1v1h-1zM365 297h1v1h-1zM365 236h1v1h-1zM365 174h1v1h-1zM427 914h1v1h-1zM427 852h1v1h-1zM427 791h1v1h-1zM427 729h1v1h-1zM427 667h1v1h-1zM427 606h1v1h-1zM427 544h1v1h-1zM427 482h1v1h-1zM427 421h1v1h-1zM427 359h1v1h-1zM427 297h1v1h-1zM427 236h1v1h-1zM427 174h1v1h-1zM489 914h1v1h-1zM489 852h1v1h-1zM489 791h1v1h-1zM489 729h1v1h-1zM489 667h1v1h-1zM489 606h1v1h-1zM489 544h1v1h-1zM489 482h1v1h-1zM489 421h1v1h-1zM489 359h1v1h-1zM489 297h1v1h-1zM489 236h1v1h-1zM489 174h1v1h-1zM550 914h1v1h-1zM550 852h1v1h-1zM550 791h1v1h-1zM550 729h1v1h-1zM550 667h1v1h-1zM550 606h1v1h-1zM550 544h1v1h-1zM550 482h1v1h-1zM550 421h1v1h-1zM550 359h1v1h-1zM550 297h1v1h-1zM550 236h1v1h-1zM550 174h1v1h-1zM612 914h1v1h-1zM612 852h1v1h-1zM612 791h1v1h-1zM612 729h1v1h-1zM612 667h1v1h-1zM612 606h1v1h-1zM612 544h1v1h-1zM612 482h1v1h-1zM612 421h1v1h-1zM612 359h1v1h-1zM612 297h1v1h-1zM612 236h1v1h-1zM612 174h1v1h-1zM674 914h1v1h-1zM674 852h1v1h-1zM674 791h1v1h-1zM674 729h1v1h-1zM674 667h1v1h-1zM674 606h1v1h-1zM674 544h1v1h-1zM674 482h1v1h-1zM674 421h1v1h-1zM674 359h1v1h-1zM674 297h1v1h-1zM674 236h1v1h-1zM674 174h1v1h-1zM735 914h1v1h-1zM735 852h1v1h-1zM735 791h1v1h-1zM735 729h1v1h-1zM735 667h1v1h-1zM735 606h1v1h-1zM735 544h1v1h-1zM735 482h1v1h-1zM735 421h1v1h-1zM735 359h1v1h-1zM735 297h1v1h-1zM735 236h1v1h-1zM735 174h1v1h-1zM797 914h1v1h-1zM797 852h1v1h-1zM797 791h1v1h-1zM797 729h1v1h-1zM797 667h1v1h-1zM797 606h1v1h-1zM797 544h1v1h-1zM797 482h1v1h-1zM797 421h1v1h-1zM797 359h1v1h-1zM797 297h1v1h-1zM797 236h1v1h-1zM797 174h1v1h-1z" fill="#000"/>
<rect x="79.5" y="474.5" width="107" height="115" fill="none" stroke="#0a1a6a" stroke-width="2"/>
<rect x="77.0" y="472.0" width="5" height="5" fill="#fff" stroke="#333" stroke-width="0.8"/>
<rect x="184.0" y="472.0" width="5" height="5" fill="#fff" stroke="#333" stroke-width="0.8"/>
<rect x="77.0" y="587.0" width="5" height="5" fill="#fff" stroke="#333" stroke-width="0.8"/>
<rect x="184.0" y="587.0" width="5" height="5" fill="#fff" stroke="#333" stroke-width="0.8"/>
<rect x="630" y="507.5" width="123" height="60" fill="none" stroke="#000a50" stroke-width="2"/>
<circle cx="133" cy="531" r="4.3" fill="#ffc000" stroke="#c05000" stroke-width="1"/>
<circle cx="692" cy="537" r="4.3" fill="#ffd000" stroke="#a04000" stroke-width="1"/>
<text x="132" y="554" font-size="11" text-anchor="middle" fill="#000">2.87</text>
<text x="692" y="560" font-size="11" text-anchor="middle" fill="#000">10</text>
<g transform="translate(57.0,359)"><path d="M0 0L0 -4.5A4.5 4.5 0 0 0 -4.5 0Z" fill="#b020e0"/><path d="M0 0L0 4.5A4.5 4.5 0 0 0 4.5 0Z" fill="#b020e0"/><circle r="4.6" fill="none" stroke="#b00000" stroke-width="1.2" stroke-dasharray="2,0.6"/><path d="M-5 0H5M0 -5V5" stroke="#300" stroke-width="1"/></g>
<text x="57.0" y="381.5" font-size="11" text-anchor="middle" fill="#000">Borehole 2</text>
<g transform="translate(242.0,359)"><path d="M0 0L0 -4.5A4.5 4.5 0 0 0 -4.5 0Z" fill="#b020e0"/><path d="M0 0L0 4.5A4.5 4.5 0 0 0 4.5 0Z" fill="#b020e0"/><circle r="4.6" fill="none" stroke="#b00000" stroke-width="1.2" stroke-dasharray="2,0.6"/><path d="M-5 0H5M0 -5V5" stroke="#300" stroke-width="1"/></g>
<text x="242.0" y="381.5" font-size="11" text-anchor="middle" fill="#000">Borehole 4</text>
<g transform="translate(550.0,359)"><path d="M0 0L0 -4.5A4.5 4.5 0 0 0 -4.5 0Z" fill="#b020e0"/><path d="M0 0L0 4.5A4.5 4.5 0 0 0 4.5 0Z" fill="#b020e0"/><circle r="4.6" fill="none" stroke="#b00000" stroke-width="1.2" stroke-dasharray="2,0.6"/><path d="M-5 0H5M0 -5V5" stroke="#300" stroke-width="1"/></g>
<text x="550.0" y="381.5" font-size="11" text-anchor="middle" fill="#000">Borehole 6</text>
<g transform="translate(797.0,359)"><path d="M0 0L0 -4.5A4.5 4.5 0 0 0 -4.5 0Z" fill="#b020e0"/><path d="M0 0L0 4.5A4.5 4.5 0 0 0 4.5 0Z" fill="#b020e0"/><circle r="4.6" fill="none" stroke="#b00000" stroke-width="1.2" stroke-dasharray="2,0.6"/><path d="M-5 0H5M0 -5V5" stroke="#300" stroke-width="1"/></g>
<text x="797.0" y="381.5" font-size="11" text-anchor="middle" fill="#000">Borehole 7</text>
<g transform="translate(57.0,729)"><path d="M0 0L0 -4.5A4.5 4.5 0 0 0 -4.5 0Z" fill="#b020e0"/><path d="M0 0L0 4.5A4.5 4.5 0 0 0 4.5 0Z" fill="#b020e0"/><circle r="4.6" fill="none" stroke="#b00000" stroke-width="1.2" stroke-dasharray="2,0.6"/><path d="M-5 0H5M0 -5V5" stroke="#300" stroke-width="1"/></g>
<text x="57.0" y="751.5" font-size="11" text-anchor="middle" fill="#000">Borehole 1</text>
<g transform="translate(242.0,729)"><path d="M0 0L0 -4.5A4.5 4.5 0 0 0 -4.5 0Z" fill="#b020e0"/><path d="M0 0L0 4.5A4.5 4.5 0 0 0 4.5 0Z" fill="#b020e0"/><circle r="4.6" fill="none" stroke="#b00000" stroke-width="1.2" stroke-dasharray="2,0.6"/><path d="M-5 0H5M0 -5V5" stroke="#300" stroke-width="1"/></g>
<text x="242.0" y="751.5" font-size="11" text-anchor="middle" fill="#000">Borehole 3</text>
<g transform="translate(550.0,729)"><path d="M0 0L0 -4.5A4.5 4.5 0 0 0 -4.5 0Z" fill="#b020e0"/><path d="M0 0L0 4.5A4.5 4.5 0 0 0 4.5 0Z" fill="#b020e0"/><circle r="4.6" fill="none" stroke="#b00000" stroke-width="1.2" stroke-dasharray="2,0.6"/><path d="M-5 0H5M0 -5V5" stroke="#300" stroke-width="1"/></g>
<text x="550.0" y="751.5" font-size="11" text-anchor="middle" fill="#000">Borehole 5</text>
<g transform="translate(797.0,729)"><path d="M0 0L0 -4.5A4.5 4.5 0 0 0 -4.5 0Z" fill="#b020e0"/><path d="M0 0L0 4.5A4.5 4.5 0 0 0 4.5 0Z" fill="#b020e0"/><circle r="4.6" fill="none" stroke="#b00000" stroke-width="1.2" stroke-dasharray="2,0.6"/><path d="M-5 0H5M0 -5V5" stroke="#300" stroke-width="1"/></g>
<text x="797.0" y="751.5" font-size="11" text-anchor="middle" fill="#000">Borehole 8</text>
<rect x="20" y="116" width="1" height="854" fill="#000"/>
<rect x="20" y="969" width="819" height="1" fill="#000"/>
<path d="M17 963h2v1h-2zM17 951h2v1h-2zM17 939h2v1h-2zM17 926h2v1h-2zM14 914h5v1h-5zM17 902h2v1h-2zM17 889h2v1h-2zM17 877h2v1h-2zM17 865h2v1h-2zM14 852h5v1h-5zM17 840h2v1h-2zM17 828h2v1h-2zM17 815h2v1h-2zM17 803h2v1h-2zM14 791h5v1h-5zM17 778h2v1h-2zM17 766h2v1h-2zM17 754h2v1h-2zM17 741h2v1h-2zM14 729h5v1h-5zM17 717h2v1h-2zM17 704h2v1h-2zM17 692h2v1h-2zM17 680h2v1h-2zM14 667h5v1h-5zM17 655h2v1h-2zM17 643h2v1h-2zM17 630h2v1h-2zM17 618h2v1h-2zM14 606h5v1h-5zM17 593h2v1h-2zM17 581h2v1h-2zM17 569h2v1h-2zM17 556h2v1h-2zM14 544h5v1h-5zM17 532h2v1h-2zM17 519h2v1h-2zM17 507h2v1h-2zM17 495h2v1h-2zM14 482h5v1h-5zM17 470h2v1h-2zM17 458h2v1h-2zM17 445h2v1h-2zM17 433h2v1h-2zM14 421h5v1h-5zM17 408h2v1h-2zM17 396h2v1h-2zM17 384h2v1h-2zM17 371h2v1h-2zM14 359h5v1h-5zM17 347h2v1h-2zM17 334h2v1h-2zM17 322h2v1h-2zM17 310h2v1h-2zM14 297h5v1h-5zM17 285h2v1h-2zM17 273h2v1h-2zM17 260h2v1h-2zM17 248h2v1h-2zM14 236h5v1h-5zM17 223h2v1h-2zM17 211h2v1h-2zM17 199h2v1h-2zM17 186h2v1h-2zM14 174h5v1h-5zM17 162h2v1h-2zM17 149h2v1h-2zM17 137h2v1h-2zM17 125h2v1h-2zM32 971h1v2h-1zM45 971h1v2h-1zM57 971h1v5h-1zM69 971h1v2h-1zM82 971h1v2h-1zM94 971h1v2h-1zM106 971h1v2h-1zM119 971h1v5h-1zM131 971h1v2h-1zM143 971h1v2h-1zM156 971h1v2h-1zM168 971h1v2h-1zM180 971h1v5h-1zM193 971h1v2h-1zM205 971h1v2h-1zM217 971h1v2h-1zM230 971h1v2h-1zM242 971h1v5h-1zM254 971h1v2h-1zM267 971h1v2h-1zM279 971h1v2h-1zM291 971h1v2h-1zM304 971h1v5h-1zM316 971h1v2h-1zM328 971h1v2h-1zM341 971h1v2h-1zM353 971h1v2h-1zM365 971h1v5h-1zM378 971h1v2h-1zM390 971h1v2h-1zM402 971h1v2h-1zM415 971h1v2h-1zM427 971h1v5h-1zM439 971h1v2h-1zM452 971h1v2h-1zM464 971h1v2h-1zM476 971h1v2h-1zM489 971h1v5h-1zM501 971h1v2h-1zM513 971h1v2h-1zM526 971h1v2h-1zM538 971h1v2h-1zM550 971h1v5h-1zM563 971h1v2h-1zM575 971h1v2h-1zM587 971h1v2h-1zM600 971h1v2h-1zM612 971h1v5h-1zM624 971h1v2h-1zM637 971h1v2h-1zM649 971h1v2h-1zM661 971h1v2h-1zM674 971h1v5h-1zM686 971h1v2h-1zM698 971h1v2h-1zM711 971h1v2h-1zM723 971h1v2h-1zM735 971h1v5h-1zM748 971h1v2h-1zM760 971h1v2h-1zM772 971h1v2h-1zM785 971h1v2h-1zM797 971h1v5h-1zM809 971h1v2h-1zM822 971h1v2h-1zM834 971h1v2h-1z" fill="#000"/>
<text transform="translate(12.5,236.2) rotate(-90)" font-size="10" text-anchor="middle" fill="#000">40</text>
<text transform="translate(12.5,359.5) rotate(-90)" font-size="10" text-anchor="middle" fill="#000">30</text>
<text transform="translate(12.5,482.8) rotate(-90)" font-size="10" text-anchor="middle" fill="#000">20</text>
<text transform="translate(12.5,606.2) rotate(-90)" font-size="10" text-anchor="middle" fill="#000">10</text>
<text transform="translate(12.5,729.5) rotate(-90)" font-size="10" text-anchor="middle" fill="#000">0</text>
<text transform="translate(12.5,852.8) rotate(-90)" font-size="10" text-anchor="middle" fill="#000">-10</text>
<text x="57.0" y="983.5" font-size="10" text-anchor="middle" fill="#000">0</text>
<text x="180.3" y="983.5" font-size="10" text-anchor="middle" fill="#000">10</text>
<text x="303.7" y="983.5" font-size="10" text-anchor="middle" fill="#000">20</text>
<text x="427.0" y="983.5" font-size="10" text-anchor="middle" fill="#000">30</text>
<text x="550.3" y="983.5" font-size="10" text-anchor="middle" fill="#000">40</text>
<text x="673.6" y="983.5" font-size="10" text-anchor="middle" fill="#000">50</text>
<text x="797.0" y="983.5" font-size="10" text-anchor="middle" fill="#000">60</text>
<rect x="0" y="114" width="840" height="2" fill="#6a6a6a"/>
<rect x="0" y="114" width="2" height="873" fill="#8a8a8a"/>
<rect x="0" y="987" width="840" height="1" fill="#e4e4e4"/>
</svg>
<!-- 3d view -->
<svg class="a" style="left:844px;top:114px" width="830" height="874" viewBox="844 114 830 874">
<defs>
<linearGradient id="fin1" gradientUnits="userSpaceOnUse" x1="0" y1="468" x2="0" y2="550">
<stop offset="0" stop-color="#ff6000"/><stop offset="0.14" stop-color="#ff7800"/><stop offset="0.3" stop-color="#ffd800"/><stop offset="0.42" stop-color="#c0ff00"/><stop offset="0.58" stop-color="#00f000"/><stop offset="0.76" stop-color="#00ffa0"/><stop offset="1" stop-color="#00ffff"/></linearGradient>
<linearGradient id="fin1b" gradientUnits="userSpaceOnUse" x1="0" y1="566" x2="0" y2="630">
<stop offset="0" stop-color="#0098ff"/><stop offset="1" stop-color="#0048f0"/></linearGradient>
<linearGradient id="fin2" gradientUnits="userSpaceOnUse" x1="0" y1="572" x2="0" y2="738">
<stop offset="0" stop-color="#ff6400"/><stop offset="0.06" stop-color="#ff8000"/><stop offset="0.13" stop-color="#ffe000"/><stop offset="0.2" stop-color="#b0ff00"/><stop offset="0.28" stop-color="#00e800"/><stop offset="0.4" stop-color="#00ff90"/><stop offset="0.5" stop-color="#00f8ff"/><stop offset="0.62" stop-color="#00a8ff"/><stop offset="0.8" stop-color="#0060ff"/><stop offset="1" stop-color="#0018ff"/></linearGradient>
<linearGradient id="cyl" x1="0" y1="0" x2="1" y2="0"><stop offset="0" stop-color="#fafac4"/><stop offset="0.3" stop-color="#ffffc8"/><stop offset="1" stop-color="#fcfcc6"/></linearGradient>
<radialGradient id="bpl" gradientUnits="userSpaceOnUse" cx="1010" cy="547" r="100" gradientTransform="translate(1010 547) scale(1.2 0.22) translate(-1010 -547)">
<stop offset="0" stop-color="#18b0d8"/><stop offset="0.4" stop-color="#0c70c8"/><stop offset="0.75" stop-color="#0630b8"/><stop offset="1" stop-color="#0008a8"/></radialGradient>
<linearGradient id="lface" x1="0" y1="0" x2="1" y2="0"><stop offset="0" stop-color="#e8e8cd"/><stop offset="1" stop-color="#eaeacf"/></linearGradient>
<linearGradient id="bface" x1="0" y1="0" x2="1" y2="0"><stop offset="0" stop-color="#f6f6d9"/><stop offset="1" stop-color="#f8f8db"/></linearGradient>
</defs>
<rect x="844" y="114" width="830" height="874" fill="#fff"/>
<polygon points="888.0,478.0 925.0,471.0 961.0,463.5 1021.0,452.6 1079.0,457.0 1136.0,458.4 1144.0,462.0 1507.0,553.0 1506.0,714.0 1420.0,695.0 1023.0,605.0 890.0,646.0" fill="url(#bface)" />
<polygon points="1421.0,591.0 1507.0,553.0 1506.0,714.0 1420.0,773.0" fill="#f6f6da" />
<polygon points="1420.0,695.0 1506.0,714.0 1420.0,773.0" fill="#f6f6da" />
<polygon points="888.0,478.0 1023.0,471.0 1023.0,605.0 890.0,646.0" fill="url(#lface)" />
<polygon points="924.0,561.7 1023.0,534.0 1111.7,535.8 1480.0,553.0 1406.0,587.0 1070.0,570.0 1023.0,567.5" fill="#0006a8" />
<polygon points="924.0,561.7 1023.0,534.0 1111.7,535.8 1200.0,539.0 1190.0,560.0 1070.0,570.0 1023.0,567.5" fill="url(#bpl)" />
<ellipse cx="1370" cy="570" rx="54" ry="8" fill="#0c50c8" opacity=".9"/><ellipse cx="1370" cy="570" rx="48" ry="6.5" fill="#28c8b0"/><ellipse cx="1370" cy="570" rx="42" ry="5" fill="#d8a040"/><ellipse cx="1370" cy="570" rx="36" ry="3.5" fill="#d85020"/>
<path d="M894 563L1023 570L1200 580L1406 589" stroke="#a8a8a8" stroke-width="2" stroke-dasharray="6,4" fill="none"/>
<path d="M1040 468L1150 471L1240 474Q1254 476 1250 482Q1240 492 1200 502Q1150 516 1120 530Q1100 545 1088 550L1040 549Z" fill="url(#fin1)"/>
<path d="M1039 568L1070 570Q1055 590 1047 628L1040 628Z" fill="url(#fin1b)"/>
<path d="M1379 588L1421 575L1520 572L1611 576Q1632 578 1626 586Q1600 596 1555 598Q1500 610 1462 627Q1432 645 1414 662Q1400 700 1391 736L1379 736Z" fill="url(#fin2)"/>
<path d="M888.0 478.0L901.0 480.8M901.0 480.8L915.0 476.6M915.0 476.6L929.0 486.7M929.0 486.7L943.0 475.1M943.0 475.1L957.0 492.6M957.0 492.6L971.0 473.7M971.0 473.7L985.0 498.6M985.0 498.6L999.0 472.2M999.0 472.2L1011.0 504.1M1011.0 504.1L1025.0 470.9M888.0 478.0L1023.0 471.0M1100.0 521.9L1113.5 462.0M1113.5 462.0L1127.0 524.7M1113.5 462.0L1140.5 462.0M1127.0 524.7L1140.5 462.0M1140.5 462.0L1154.0 527.6M1140.5 462.0L1167.5 467.9M1154.0 527.6L1167.5 467.9M1167.5 467.9L1181.0 530.4M1167.5 467.9L1194.5 474.7M1181.0 530.4L1194.5 474.7M1194.5 474.7L1208.0 533.2M1194.5 474.7L1221.5 481.4M1208.0 533.2L1221.5 481.4M1221.5 481.4L1235.0 536.1M1221.5 481.4L1248.5 488.2M1235.0 536.1L1248.5 488.2M1248.5 488.2L1262.0 538.9M1248.5 488.2L1275.5 495.0M1262.0 538.9L1275.5 495.0M1275.5 495.0L1289.0 541.7M1275.5 495.0L1302.5 501.7M1289.0 541.7L1302.5 501.7M1302.5 501.7L1316.0 544.6M1302.5 501.7L1329.5 508.5M1316.0 544.6L1329.5 508.5M1329.5 508.5L1343.0 546.6M1329.5 508.5L1356.5 515.3M1343.0 546.6L1356.5 515.3M1356.5 515.3L1370.0 547.9M1356.5 515.3L1383.5 522.0M1370.0 547.9L1383.5 522.0M1383.5 522.0L1397.0 549.1M1383.5 522.0L1410.5 528.8M1397.0 549.1L1410.5 528.8M1410.5 528.8L1424.0 550.4M1410.5 528.8L1437.5 535.6M1424.0 550.4L1437.5 535.6M1437.5 535.6L1451.0 551.6M1437.5 535.6L1464.5 542.3M1451.0 551.6L1464.5 542.3M1464.5 542.3L1478.0 552.9M1040.0 515.6L1330.0 546.0M1330.0 546.0L1480.0 553.0M1060.0 517.7L1235.0 577.5M1084.0 520.2L1235.0 577.5M1108.0 522.7L1235.0 577.5M1132.0 525.3L1235.0 577.5M1156.0 527.8L1235.0 577.5M1180.0 530.3L1235.0 577.5M1204.0 532.8L1235.0 577.5M1228.0 535.3L1235.0 577.5M1110.0 523.0L1160.0 535.7M1135.0 525.6L1185.0 541.0M1160.0 528.2L1210.0 546.3M1185.0 530.8L1235.0 551.6M1210.0 533.5L1260.0 556.9M1235.0 536.1L1285.0 562.2M1260.0 538.7L1310.0 567.5M1285.0 541.3L1335.0 572.8M1240.0 536.6L1275.0 560.0M1252.0 537.9L1220.0 548.4M1266.0 539.3L1301.0 565.6M1278.0 540.6L1246.0 553.9M1292.0 542.1L1327.0 571.1M1304.0 543.3L1272.0 559.4M1318.0 544.8L1353.0 576.6M1330.0 546.0L1298.0 564.9M1344.0 546.7L1379.0 582.1M1356.0 547.2L1324.0 570.4M1370.0 547.9L1405.0 587.6M1382.0 548.4L1350.0 575.9M1396.0 549.1L1431.0 593.1M1408.0 549.6L1376.0 581.5M925.0 471.0L961.0 463.5M961.0 463.5L1021.0 452.6M1021.0 452.6L1079.0 457.0M1079.0 457.0L1136.0 458.4M1136.0 458.4L1144.0 462.0M935.0 472.5L965.0 467.5M965.0 467.5L1025.0 456.6M1025.0 456.6L1083.0 461.0M1083.0 461.0L1140.0 462.4M1140.0 462.4L1149.0 468.0M945.0 474.0L969.0 471.5M969.0 471.5L1029.0 460.6M1029.0 460.6L1087.0 465.0M1087.0 465.0L1144.0 466.4M1144.0 466.4L1154.0 474.0M955.0 475.5L973.0 475.5M973.0 475.5L1033.0 464.6M1033.0 464.6L1091.0 469.0M1091.0 469.0L1148.0 470.4M1148.0 470.4L1159.0 480.0M965.0 477.0L977.0 479.5M977.0 479.5L1037.0 468.6M1037.0 468.6L1095.0 473.0M1095.0 473.0L1152.0 474.4M1152.0 474.4L1164.0 486.0M940.0 468.4L956.0 483.2M962.0 466.0L978.0 485.4M984.0 462.5L1000.0 487.6M1006.0 459.1L1022.0 489.8M1028.0 458.0L1044.0 492.0M1050.0 459.9L1066.0 494.2M1072.0 463.5L1088.0 496.4M1094.0 466.8L1110.0 498.6M1116.0 468.8L1132.0 500.8M1138.0 469.7L1154.0 503.0" stroke="#9c9a10" stroke-width="1" fill="none"/>
<path d="M1323.8 552.7h6.3M1266.5 562.7h4.8M1263.2 561.6h3.2M1348.9 551.2h3.5M1346.8 576.3h3.6M1300.9 567.4h7.7M1381.6 563.6h7.9M1260.6 573.0h4.4M1282.9 549.7h4.5M1436.1 556.2h5.9M1395.7 563.5h5.7M1264.3 546.9h4.0M1405.1 565.8h4.6M1383.5 565.6h4.5M1431.1 567.2h4.2M1381.0 567.9h7.4M1416.3 560.2h7.9M1276.9 559.3h6.8M1284.7 562.0h3.2M1402.4 576.9h5.9M1449.6 557.2h6.5M1385.5 569.9h5.3M1441.5 567.8h5.4M1401.4 553.4h6.5M1397.5 584.3h7.1M1314.9 560.1h6.3M1255.1 559.7h3.8M1276.7 547.4h6.8M1279.5 553.8h5.0M1448.7 554.5h5.2M1375.3 579.6h7.1M1447.0 557.0h5.1M1331.8 577.4h7.8M1284.4 551.7h4.2M1303.2 562.8h5.9M1309.9 547.2h5.1M1334.2 567.0h7.8M1407.4 568.5h6.1M1404.2 553.3h7.5M1427.8 572.2h7.0M1339.5 561.7h3.5M1394.6 553.1h3.3M1297.6 551.8h4.7M1262.0 544.8h3.8M1273.1 557.3h3.1M1449.3 560.6h3.7M1307.5 558.4h4.8M1278.0 573.5h8.0M1356.2 565.3h3.4M1273.3 556.6h4.3M1439.0 555.8h3.1M1466.8 555.8h3.7M1373.8 550.9h5.6M1446.8 562.4h4.3M1333.6 553.7h6.9M1371.4 575.9h4.6M1300.9 573.5h7.9M1444.4 564.6h7.1M1418.7 558.3h5.6M1331.1 549.0h3.1M1313.7 555.8h6.5M1468.1 555.4h7.7M1467.7 555.2h4.1M1301.7 553.2h4.0M1392.3 581.0h7.2M1359.3 571.1h7.0M1269.3 566.9h7.5M1428.4 569.2h5.4M1290.7 572.2h4.7M1432.6 572.2h5.0M1341.5 580.0h6.6M1288.8 550.3h3.8M1456.3 560.3h3.7M1438.4 569.8h6.3M1329.9 566.2h3.7M1253.2 576.3h6.2M1370.1 581.0h5.2M1448.8 563.3h4.1M1307.4 556.6h4.2M1383.7 559.2h5.1M1279.9 575.7h4.8M1354.5 568.5h7.5M1345.9 579.2h5.5M1371.3 567.4h3.1M1350.3 555.0h3.0M1432.2 556.2h5.4M1415.3 568.0h4.6M1368.2 568.3h6.9M1274.2 563.8h4.2M1313.1 572.8h5.5M1378.1 575.6h7.6M1351.1 569.3h5.5M1366.8 572.8h5.3M1371.6 565.9h7.7M1409.4 579.5h7.7M1309.2 565.5h7.7M1441.5 555.3h3.6M1350.8 551.4h4.2M1266.7 567.1h6.9M1454.5 555.2h6.6M1400.5 556.1h7.4M1470.6 554.7h7.8M1340.8 564.7h7.9M1439.8 555.8h5.2M1367.6 561.0h4.0M1322.6 571.6h3.1M1376.3 564.8h3.1M1325.6 568.5h5.6M1264.7 577.4h6.9M1471.5 554.6h4.3M1259.0 570.3h4.4M1279.5 559.6h7.6M1436.7 557.6h3.7M1459.6 557.7h6.5M1270.4 547.1h6.4M1347.0 551.2h7.7M1394.7 577.8h3.4M1445.2 554.3h7.3M1353.5 560.4h5.8M1461.3 555.6h3.6M1370.1 557.8h3.5M1286.8 547.6h4.0M1321.1 557.7h6.8M1316.1 563.9h3.9M1329.1 548.6h4.3M1253.5 568.5h5.8M1293.2 562.0h7.7M1274.2 572.4h5.2M1362.9 577.3h5.0M1365.5 572.6h7.9M1328.1 575.5h6.5M1395.0 564.6h4.7M1262.4 549.1h3.4M1418.9 559.0h3.8M1269.3 572.9h7.4M1402.9 560.8h4.2M1316.8 562.6h3.8M1351.6 557.8h7.8M1471.8 554.7h4.2M1470.2 554.8h4.8M1250.2 556.8h5.4M1364.6 556.3h5.5M1251.1 553.0h3.4M1341.1 549.9h3.1M1319.4 555.2h5.9M1370.7 574.9h6.3M1413.2 578.1h4.9M1324.4 580.4h3.7M1415.1 570.5h3.2M1440.4 567.4h6.1M1417.3 574.6h3.7M1369.4 566.6h7.2M1433.5 569.0h5.9M1453.6 560.2h6.5M1302.4 547.7h3.7M1332.2 551.6h7.2M1377.3 571.1h6.1M1405.2 567.9h3.0M1431.9 568.0h5.5M1372.0 571.9h3.3M1418.0 559.0h3.4M1310.5 571.2h4.0M1418.7 578.5h5.5M1337.2 564.2h6.4M1424.9 567.2h6.2M1267.7 549.9h4.3M1419.5 560.3h5.8M1252.8 546.4h4.3M1403.2 574.6h6.4M1316.3 564.5h5.3M1356.3 553.2h7.5M1295.4 578.7h7.7M1254.0 559.5h7.1M1470.7 554.9h4.3M1297.8 577.7h4.1M1382.6 555.2h5.6M1467.2 554.7h7.1M1366.0 579.2h6.5M1302.8 576.4h5.4M1255.7 544.6h5.5M1352.8 559.1h3.7M1328.4 558.4h7.2M1250.4 568.9h7.2M1277.4 576.1h6.6M1455.6 556.3h4.9M1339.6 581.6h5.9M1332.2 562.3h4.4M1261.0 548.1h7.2M1315.1 578.3h4.2M1310.6 564.0h3.9M1335.1 580.0h7.4M1435.1 564.7h7.6M1464.5 556.4h6.6M1261.3 568.9h5.3M1421.6 568.7h4.4M1261.2 575.3h3.6M1357.7 560.7h4.5M1418.5 578.6h4.3M1399.6 561.3h5.8M1339.9 554.0h3.8M1297.4 576.4h5.5M1300.2 576.5h8.0M1352.6 553.7h4.0M1270.7 556.5h3.5M1304.5 555.3h5.8M1452.3 561.2h5.1M1344.4 566.1h4.9M1327.1 549.9h4.4M1470.6 554.7h5.5M1393.6 579.8h4.1M1311.8 555.4h5.0M1351.7 580.7h7.2M1449.0 553.8h3.2M1411.8 579.2h5.4M1383.9 550.5h5.0M1461.3 558.6h7.3M1471.7 554.7h3.5M1285.2 563.1h6.4M1464.7 557.0h6.2M1424.4 563.4h5.8M1259.0 570.4h4.2M1459.7 558.1h4.5M1279.2 553.9h6.2M1409.3 555.3h3.4M1369.6 569.3h4.9M1301.0 566.5h3.1M1318.7 562.7h7.8M1397.0 580.7h5.4M1303.5 554.9h7.8M1410.7 561.3h3.1M1363.6 572.0h5.1M1308.7 569.1h7.6M1301.7 547.8h4.7M1345.9 571.4h4.0M1431.7 567.8h5.5M1296.8 578.5h4.6M1437.0 557.1h4.1M1423.4 559.6h7.8M1363.0 555.8h4.1M1345.1 570.8h7.7M1283.4 558.8h4.1M1282.4 547.5h3.3M1339.7 578.3h7.4M1417.1 579.8h7.7M1325.1 553.9h7.7M1420.2 553.0h6.3M1336.3 560.7h4.7M1288.6 546.2h4.4M1330.1 579.7h3.6M1469.9 554.8h4.8M1437.3 567.5h5.2M1261.2 560.4h4.9M1459.6 555.3h4.8M1454.5 554.1h5.1M1435.1 567.3h3.2M1257.9 546.7h7.6M1308.6 571.7h7.5M1327.3 556.9h7.8M1390.7 559.6h6.6M1322.2 556.8h3.0M1422.3 575.4h6.2M1465.1 554.4h4.2M1358.3 581.2h7.8M1338.1 556.7h5.1M1362.5 580.4h3.9M1433.0 567.4h7.1M1426.2 566.6h4.6M1322.9 559.7h6.9M1268.0 551.6h6.8M1306.4 549.0h3.2M1376.0 561.0h7.9M1451.4 564.0h4.3M1269.2 548.3h5.5M1411.8 565.5h4.2M1345.0 569.3h6.4M1420.5 574.3h6.3M1277.6 573.3h4.5M1379.2 562.7h6.7M1295.4 554.6h4.2M1285.0 575.1h5.9M1324.4 560.9h8.0M1365.7 557.4h7.0M1399.0 584.3h3.5M1358.2 576.6h7.2M1458.5 554.3h4.5M1277.2 551.8h7.9M1383.0 581.5h4.9M1447.5 559.1h4.3M1427.3 574.0h3.5M1385.9 571.3h4.1M1334.1 552.9h4.0M1308.1 566.8h6.3M1296.4 546.8h4.6M1404.7 557.7h4.6M1296.4 572.7h5.7M1264.4 548.3h5.0M1375.4 571.4h3.5M1287.3 568.9h5.0M1314.6 557.5h7.8M1321.2 566.4h4.8M1344.9 577.4h8.0M1332.9 554.7h6.6M1296.4 546.6h7.5M1346.6 576.0h5.0M1451.3 558.5h3.8M1253.4 562.5h6.2M1457.4 554.6h6.1M1334.6 564.9h3.7M1314.6 564.5h7.6M1274.8 561.6h7.0M1470.4 554.7h3.6M1465.0 557.8h5.4M1262.2 575.3h4.9M1456.2 558.9h7.1M1286.5 571.9h4.1M1342.2 576.7h7.1M1291.7 553.4h5.0M1368.1 562.5h3.6M1306.3 570.9h7.5M1259.4 563.2h6.8M1258.7 572.2h3.6M1386.7 569.0h6.1M1319.8 561.4h5.9M1347.1 570.7h5.2M1349.9 549.7h6.1M1361.6 557.3h6.8M1427.8 562.8h3.9M1357.9 552.9h3.6M1348.2 551.9h5.2M1366.3 551.0h6.2M1268.8 569.3h6.9M1366.6 551.5h5.5M1336.2 579.8h3.7M1445.4 566.8h6.7M1435.8 556.5h7.9M1362.1 581.3h7.6M1287.6 572.0h7.7M1264.9 556.5h6.8M1286.2 575.5h4.4M1436.0 555.6h5.5M1459.7 555.4h4.3M1365.4 560.3h3.2M1291.5 551.5h7.7M1405.0 581.4h3.8M1429.0 555.1h5.7M1395.1 563.1h7.4M1376.6 569.5h7.4M1273.9 578.1h6.1M1339.9 574.9h4.3M1381.6 562.4h6.8M1350.8 554.8h6.7M1261.0 571.7h4.3M1395.7 583.9h5.9M1401.3 561.8h3.0M1257.7 549.5h6.1M1348.5 565.9h7.5M1280.1 553.2h6.3M1255.1 544.6h4.8M1274.3 557.2h4.1M1383.1 570.1h4.0M1392.3 566.8h3.7M1463.5 555.3h3.7M1271.8 566.3h7.4M1428.3 561.5h4.3M1252.6 565.6h5.8M1329.9 569.4h5.2M1463.7 557.4h4.2M1456.0 554.2h5.7M1342.6 556.5h3.3M1427.6 552.8h5.8M1464.5 554.8h4.0M1388.6 567.7h6.2M1435.5 556.2h4.5M1318.5 549.1h7.4M1428.5 568.4h3.0M1442.5 564.4h5.3M1419.1 564.3h4.1M1274.0 553.0h3.2M1326.5 572.7h6.5M1442.7 563.8h4.3M1376.3 564.7h6.9M1369.3 558.7h6.2M1470.1 554.8h7.4M1253.5 553.0h4.2M1419.6 577.3h6.7M1324.5 576.9h4.6M1304.5 576.8h6.2M1408.0 573.2h7.9M1357.0 577.2h6.5M1445.5 559.3h6.6M1380.0 560.6h4.1M1392.0 553.5h7.6M1283.0 546.7h3.5M1461.8 555.9h3.7M1256.6 545.9h6.5M1394.5 574.3h6.7M1265.0 564.4h4.8M1436.4 567.8h7.5M1265.0 573.5h7.6M1465.3 554.7h4.0M1275.5 546.6h7.2M1435.1 564.8h7.1M1394.0 560.6h3.5M1272.3 570.2h4.0M1322.8 561.7h3.1M1308.5 556.3h6.6M1333.9 558.8h7.8M1364.9 578.0h6.1M1257.1 558.2h5.2M1426.2 560.5h6.5M1372.6 557.2h7.3M1270.7 572.2h3.9M1250.3 550.9h6.8M1251.0 560.4h5.5M1431.7 556.5h5.5" stroke="#9c9a10" stroke-width="1"/>
<path d="M888 478L1421 591L1507 553M1421 591V773L890 646V478M1507 553V714L1420 773M1023 605L1506 714M890 646L1023 605M1144 462L1507 553" stroke="#9c9a10" stroke-width="1.1" fill="none"/>
<rect x="1023" y="568" width="6" height="60" fill="url(#cyl)"/>
<path d="M1023 628Q1026.0 631 1029 628" stroke="#8a1010" stroke-width="1.2" fill="none"/>
<rect x="1133" y="577" width="11" height="39" fill="url(#cyl)"/>
<path d="M1133 616Q1138.5 619 1144 616" stroke="#8a1010" stroke-width="1.2" fill="none"/>
<rect x="1318" y="584" width="12" height="122" fill="url(#cyl)"/>
<path d="M1318 706Q1324.0 709 1330 706" stroke="#8a1010" stroke-width="1.2" fill="none"/>
<rect x="1372" y="590" width="7" height="146" fill="url(#cyl)"/>
<path d="M1372 736Q1375.5 739 1379 736" stroke="#8a1010" stroke-width="1.2" fill="none"/>
<rect x="1474" y="622" width="12" height="96" fill="url(#cyl)"/>
<path d="M1474 718Q1480.0 721 1486 718" stroke="#8a1010" stroke-width="1.2" fill="none"/>
<rect x="913" y="477" width="13" height="169" fill="url(#cyl)"/>
<path d="M913 646Q919.5 649 926 646" stroke="#8a1010" stroke-width="1.2" fill="none"/>
<ellipse cx="919.5" cy="477" rx="7.5" ry="2.5" fill="#801010"/>
<rect x="1028" y="481" width="13" height="172" fill="url(#cyl)"/>
<path d="M1028 653Q1034.5 656 1041 653" stroke="#8a1010" stroke-width="1.2" fill="none"/>
<ellipse cx="1034.5" cy="481" rx="7.5" ry="2.5" fill="#801010"/>
<rect x="1230" y="577" width="12" height="177" fill="url(#cyl)"/>
<path d="M1230 754Q1236.0 757 1242 754" stroke="#8a1010" stroke-width="1.2" fill="none"/>
<ellipse cx="1236.0" cy="577" rx="7.0" ry="2.5" fill="#801010"/>
<rect x="1399" y="586" width="13" height="181" fill="url(#cyl)"/>
<path d="M1399 767Q1405.5 770 1412 767" stroke="#8a1010" stroke-width="1.2" fill="none"/>
<ellipse cx="1405.5" cy="586" rx="7.5" ry="2.5" fill="#801010"/>
<ellipse cx="1137" cy="459" rx="5" ry="2.2" fill="#801010"/><ellipse cx="1030" cy="455" rx="5" ry="2.2" fill="#801010"/><ellipse cx="1027" cy="466" rx="4" ry="2" fill="#801010"/><ellipse cx="1480" cy="552" rx="6" ry="2.2" fill="#801010"/><ellipse cx="1323" cy="545" rx="5" ry="2" fill="#801010"/>
<path d="M975 443L1010 437L1073 439.5L1041 445ZM975 443V468L1041 469.5V445M1073 439.5V463.5L1041 469.5M1010 437V461L975 468M1010 461L1073 463.5" stroke="#10186a" stroke-width="1.1" fill="none"/>
<path d="M1328 540L1346 534L1425 537L1408 543ZM1328 540V570L1408 572V543M1425 537V565L1408 572M1346 534V562L1328 570" stroke="#10186a" stroke-width="1" fill="none"/>
<path d="M876 470L929 460.5" stroke="#2040ff" stroke-width="1.2"/><path d="M929 460L920 457L921 464Z" fill="#2040ff"/>
<path d="M876 470L966 474" stroke="#ff2020" stroke-width="1.2"/><path d="M963 469L977 474.5L963 479Z" fill="#ff1010"/>
<path d="M876 470L877.5 572" stroke="#108010" stroke-width="1.2"/><path d="M872 566L877.5 580L883 566Z" fill="#107010"/>
<text x="934" y="460" font-size="11" fill="#2040ff">Y</text><text x="986" y="477" font-size="11" fill="#ff2020">X</text><text x="875" y="596" font-size="11" fill="#108010">Z</text>
<path d="M1591 138V160M1590 206V228" stroke="#70b070" stroke-width="1.3"/><path d="M1547 183H1563M1615 183H1636" stroke="#ff7070" stroke-width="1.3"/>
<rect x="1563" y="160" width="45" height="45" fill="#cccbf4" stroke="#8a8a9a" stroke-width="1"/><rect x="1563" y="160" width="12" height="45" fill="#c6c0e6"/>
<path d="M1608 160H1618V206H1608Z" fill="#c8a8b0" stroke="#8a8a9a" stroke-width="1"/>
<path d="M1591 160V205" stroke="#a8c8b8" stroke-width="1.2" opacity=".7"/><path d="M1563 183H1608" stroke="#e8a0b0" stroke-width="1" opacity=".5"/><text x="1567" y="183" font-size="11.5" style="font-family:Liberation Mono" fill="#555" letter-spacing="0.3">Front</text><text x="1609" y="183" font-size="10" style="font-family:Liberation Mono" fill="#777">M</text>
<text x="1642" y="183" font-size="10" fill="#ff7070">X</text><text x="1587" y="237" font-size="10" fill="#70b070">Z</text>
<rect x="844" y="114" width="830" height="2" fill="#6a6a6a"/><rect x="844" y="114" width="2" height="874" fill="#6a6a6a"/>
</svg>
<!-- bottom area -->
<div class="a" style="left:0;top:988px;width:1676px;height:1px;background:#f4f4f4"></div>
<div class="a" style="left:0;top:989px;width:1676px;height:1px;background:#000"></div>
<!-- stage nav buttons -->
<svg class="a" style="left:0;top:990px" width="110" height="19">
<g fill="#a0a0a0">
<rect x="18" y="0" width="2" height="18"/><rect x="0" y="16" width="20" height="2"/>
<rect x="39" y="0" width="2" height="18"/><rect x="21" y="16" width="20" height="2"/>
<rect x="60" y="0" width="2" height="18"/><rect x="42" y="16" width="20" height="2"/>
<rect x="81" y="0" width="2" height="18"/><rect x="63" y="16" width="20" height="2"/>
<rect x="102" y="0" width="2" height="18"/><rect x="84" y="16" width="20" height="2"/>
<rect x="6" y="4" width="1" height="9"/><path d="M13 4V13L8 8.5Z"/>
<path d="M33 4V13L28 8.5Z"/>
<path d="M49 5h1v2h2v-2h1v2h1v1h-1v2h1v1h-1v2h-1v-2h-2v2h-1v-2h-1v-1h1v-2h-1v-1h1zM50 8v2h2v-2z"/>
<path d="M70 4V13L75 8.5Z"/>
<path d="M91 4V13L96 8.5Z"/><rect x="96" y="4" width="1" height="9"/>
</g></svg>
<svg class="a" style="left:104px;top:989px" width="76" height="20">
<path d="M1 0.5H71L63.5 18.5H8.5Z" fill="#fff" stroke="#000" stroke-width="1"/>
<rect x="0" y="0" width="76" height="1" fill="#000"/>
<text x="12" y="14" font-size="12" font-weight="bold" fill="#000" letter-spacing="0.6">Stage 1</text>
</svg>
<!-- command input -->
<div class="a" style="left:1520px;top:1010px;width:131px;height:18px;background:#fff;border:1px solid #000"></div>
<div class="a" style="left:1524px;top:1013px;width:1px;height:13px;background:#000"></div>
<div class="a" style="left:0;top:1030px;width:1672px;height:1px;background:#80848c"></div>
<div class="a" style="left:0;top:1031px;width:1672px;height:5px;background:#fff"></div>
<div class="a" style="left:1672px;top:1030px;width:1px;height:7px;background:#a0a4ac"></div>
<div class="a" style="left:516px;top:1036px;width:1157px;height:1px;background:#80848c"></div>
<div class="a" style="left:2px;top:1037px;width:344px;height:20px;background:linear-gradient(#d4d4d4 0%,#d6d6d6 45%,#ececec 47%,#eeeeee 100%);border:1px solid #8a8e96;box-sizing:border-box"></div>
<div class="a" style="left:346px;top:1036px;width:170px;height:22px;background:#fff"></div>
<div class="a" style="left:345px;top:1036px;width:1px;height:22px;background:#8a8e96"></div>
<div class="a" style="left:516px;top:1036px;width:1px;height:22px;background:#8a8e96"></div>
<div class="a" style="left:0;top:1058px;width:1676px;height:1px;background:#8a8e96"></div>
<div class="a" style="left:27px;top:1040px;font-size:12px;letter-spacing:-0.64px">Tutorial 16 Non-Horizontal Ground Surface.s3z - Plan/3D View*</div>
<div class="a" style="left:372px;top:1041px;font-size:12px;letter-spacing:-0.56px">Project 3 - Plan/3D View*</div>
<!-- status bar -->
<div class="a" style="left:2px;top:1065px;font-size:11.5px;font-weight:bold;letter-spacing:-0.5px">Ready</div>
<div class="a" style="left:1245px;top:1064px;font-size:12px;font-weight:bold;letter-spacing:-0.2px">MAX DATATIPS</div>
<div class="a" style="left:1346px;top:1064px;font-size:12px;font-weight:bold;letter-spacing:-0.2px">SNAP</div>
<div class="a" style="left:1385px;top:1064px;font-size:12px;font-weight:bold;letter-spacing:-0.2px">GRID</div>
<div class="a" style="left:1423px;top:1064px;font-size:12px;font-weight:bold;letter-spacing:-0.2px">ORTHO</div>
<div class="a" style="left:1473px;top:1064px;font-size:12px;font-weight:bold;letter-spacing:-0.2px">OSNAP</div>
<div class="a" style="left:1554px;top:1064px;font-size:12px;font-weight:bold;letter-spacing:0.1px">37.509, &nbsp;36.710</div>
<div class="a" style="left:1340px;top:1062px;width:1px;height:18px;background:#d0d0d0"></div>
<div class="a" style="left:1379px;top:1062px;width:1px;height:18px;background:#d0d0d0"></div>
<div class="a" style="left:1417px;top:1062px;width:1px;height:18px;background:#d0d0d0"></div>
<div class="a" style="left:1467px;top:1062px;width:1px;height:18px;background:#d0d0d0"></div>
<div class="a" style="left:1515px;top:1062px;width:1px;height:18px;background:#d0d0d0"></div>
<div class="a" style="left:1674px;top:1063px;width:1px;height:17px;background:#d0d0d0"></div>

<!-- splitter -->
<div class="a" style="left:1673px;top:115px;width:1px;height:873px;background:#fbfbfb"></div>
<div class="a" style="left:1682px;top:115px;width:2px;height:965px;background:#7c7c7c"></div>
<div class="a" style="left:1674px;top:534px;width:8px;height:1px;background:#8a8a8a"></div>
<div class="a" style="left:1674px;top:660px;width:8px;height:1px;background:#8a8a8a"></div>
<svg class="a" style="left:1674px;top:535px" width="8" height="125">
<path d="M3 2v8l4-4z M3 58v8l4-4z M3 114v8l4-4z" fill="#000"/>
<path d="M5 13v40 M5 69v40" stroke="#999" stroke-dasharray="1,2"/>
</svg>
<!-- panel -->
<div class="a" style="left:1684px;top:115px;width:236px;height:965px;background:linear-gradient(135deg,#f8f8f8,#fefefe 60%,#fafafa)"></div>
<div class="a" style="left:1684px;top:115px;width:236px;height:1px;background:#a0a0a0"></div>

<div class="a" style="left:1675px;top:1078px;width:245px;height:1px;background:#8a8e96"></div><div class="a" style="left:1675px;top:1079px;width:245px;height:1px;background:#fafafa"></div>
<!-- headers -->
<div class="a hdr" style="top:121px">Contour Legend</div>
<div class="a hdr" style="top:370px">Elevation / Soil Layers</div>
<div class="a hdr" style="top:681px">View Controls</div>
<!-- legend -->
<div class="a mono" style="left:1691px;top:145px">Loading Stress ZZ (kPa)</div>
<div class="a" style="left:1691px;top:163px;width:48px;height:164px;border:1px solid #000;background:linear-gradient(#0000ff 0%,#0048ff 10%,#00a0ff 20%,#00ffff 30%,#00ff80 40%,#00ff00 50%,#80ff00 62%,#ffff00 75%,#ff9900 87%,#ff1a00 100%)"></div>
<svg class="a" style="left:1740px;top:160px" width="12" height="172"><path d="M0 4.5h5M0 21h5M0 37.5h5M0 54h5M0 70.5h5M0 87h5M0 103.5h5M0 120h5M0 136.5h5M0 153h5M0 168.5h5" stroke="#000"/></svg>
<div class="a mono" style="left:1758px;top:158px;line-height:16.3px">0.0<br>1.1<br>2.2<br>3.3<br>4.4<br>5.5<br>6.6<br>7.7<br>8.8<br>9.9<br>11.0</div>
<div class="a mono" style="left:1691px;top:336px;line-height:14.4px;white-space:pre">max (stage): 10 kPa
max (all):   10 kPa</div>
<!-- elevation -->
<div class="a" style="left:1688px;top:391px;font-size:12px">Location:</div>
<div class="a" style="left:1753px;top:391px;font-size:12px">X:</div>
<div class="a" style="left:1837px;top:391px;font-size:12px">Y:</div>
<div class="a inp" style="left:1771px;top:391px;width:61px;height:22px"><span style="left:6px">0</span></div>
<div class="a inp" style="left:1854px;top:391px;width:61px;height:22px"><span style="left:6px">0</span></div>
<div class="a inp" style="left:1696px;top:419px;width:77px;height:22px"><span style="left:27px">0</span></div>
<svg class="a" style="left:1756px;top:420px" width="17" height="21">
<rect x="0.5" y="0.5" width="16" height="10" fill="#eef" stroke="#b8b8c8"/><rect x="0.5" y="10.5" width="16" height="10" fill="#eef" stroke="#b8b8c8"/>
<path d="M5 7l3.5-3.5L12 7z M5 14l3.5 3.5L12 14z" fill="#4a6a9a"/></svg>
<div class="a" style="left:1779px;top:424px;font-size:12px">m</div>
<svg class="a" style="left:1888px;top:420px" width="26" height="24">
<rect x="0.5" y="0.5" width="25" height="23" rx="3" fill="#5a9ad8" stroke="#2a5a9a"/>
<rect x="5" y="5" width="10" height="8" fill="#fff" stroke="#123" /><rect x="8" y="8" width="10" height="8" fill="#fff" stroke="#123"/><rect x="11" y="11" width="10" height="8" fill="#fff" stroke="#123"/></svg>
<!-- soil column -->
<div class="a" style="left:1698px;top:459px;width:43px;height:131px;border:1px solid #000;background:linear-gradient(90deg,#dcdca8,#f8f8d0 40%,#fbfbd4 55%,#dcdca8)"></div>
<div class="a" style="left:1700px;top:525px;width:41px;height:1px;background:#000"></div>
<svg class="a" style="left:1692px;top:520px" width="6" height="10"><path d="M0 0v10l5-5z" fill="#000"/></svg>
<svg class="a" style="left:1698px;top:592px" width="45" height="68">
<defs><pattern id="hatch" width="8" height="8" patternUnits="userSpaceOnUse"><rect width="8" height="8" fill="#f4f4f4"/><path d="M0 0L8 8M8 0L0 8" stroke="#000" stroke-width="1"/></pattern>
<linearGradient id="hg" x1="0" x2="1"><stop offset="0" stop-color="#d0d0d0" stop-opacity=".6"/><stop offset=".5" stop-color="#fff" stop-opacity="0"/><stop offset="1" stop-color="#d0d0d0" stop-opacity=".6"/></linearGradient></defs>
<rect x="0.5" y="0.5" width="44" height="67" fill="url(#hatch)" stroke="#000"/></svg>
<svg class="a" style="left:1745px;top:455px" width="14" height="210"><path d="M1 4.5H12.5V204.5H1M1 137.5H12" stroke="#000" fill="none"/></svg>
<div class="a mono2" style="left:1760px;top:455px">10</div>
<div class="a mono2" style="left:1760px;top:588px">-10</div>
<div class="a mono2" style="left:1760px;top:655px">-20 m</div>
<!-- tree -->
<div class="a" style="left:1689px;top:702px;width:226px;height:376px;background:#fff;border:1px solid #8a8e96;border-bottom:none;box-sizing:border-box"></div>
<svg class="a" style="left:0;top:2px" width="17" height="17"><use href="#s3d" x="0" y="0" width="16" height="17"/></svg>
<svg class="a" style="left:7px;top:23px" width="17" height="17"><use href="#s3d" x="0" y="0" width="16" height="17"/></svg>
<svg class="a" style="left:1813px;top:0" width="106" height="19">
<defs><linearGradient id="cbg" x1="0" y1="0" x2="0" y2="1"><stop offset="0" stop-color="#e8e2ea"/><stop offset=".45" stop-color="#d8d0dc"/><stop offset=".5" stop-color="#aca2b4"/><stop offset="1" stop-color="#b8b0c0"/></linearGradient>
<linearGradient id="crd" x1="0" y1="0" x2="0" y2="1"><stop offset="0" stop-color="#eea090"/><stop offset=".45" stop-color="#e07a68"/><stop offset=".5" stop-color="#c83a20"/><stop offset="1" stop-color="#e07050"/></linearGradient></defs>
<path d="M1.5 0V13Q1.5 17.5 6 17.5H56V0Z" fill="url(#cbg)" stroke="#3e3a48"/>
<path d="M29.5 0V17.5" stroke="#3e3a48"/>
<path d="M56.5 0V17.5H99Q103.5 17.5 103.5 13V0Z" fill="url(#crd)" stroke="#4a1010"/>
<rect x="10" y="8.5" width="11" height="4" rx="1" fill="#fff" stroke="#3a3a4a"/>
<rect x="37" y="3" width="10" height="10" rx="1" fill="#fff" stroke="#3a3a4a"/><rect x="35" y="5" width="10" height="10" rx="1" fill="#fff" stroke="#3a3a4a"/><rect x="38" y="8" width="4" height="4" fill="none" stroke="#3a3a4a"/>
<path d="M75 4L84 12M84 4L75 12" stroke="#3a3a4a" stroke-width="4.2"/><path d="M75 4L84 12M84 4L75 12" stroke="#fff" stroke-width="2.4"/>
</svg>
<svg class="a" style="left:1863px;top:23px" width="57" height="18">
<g fill="#dce8f4" stroke="#8a9aaa"><rect x="0.5" y="0.5" width="17" height="17"/><rect x="19.5" y="0.5" width="17" height="17"/><rect x="38.5" y="0.5" width="17" height="17"/></g>
<rect x="5" y="11" width="6" height="2" fill="#4a5058"/>
<path d="M24.5 9.5h6v4h-6zM26.5 9.5v-2.5h6v4h-2" stroke="#4a5058" stroke-width="1.2" fill="none"/>
<path d="M43.5 5.5L50.5 12.5M50.5 5.5L43.5 12.5" stroke="#4a5058" stroke-width="1.8"/>
</svg>

<svg class="a" style="left:5px;top:1039px" width="17" height="17"><use href="#s3d" x="0" y="0" width="16" height="17"/></svg>
<svg class="a" style="left:350px;top:1039px" width="17" height="17"><use href="#s3d" x="0" y="0" width="16" height="17"/></svg>
<svg class="a" style="left:1689px;top:702px" width="226" height="160">
<g stroke="#a0a0a0" stroke-dasharray="1,1" fill="none">
<path d="M13.5 10V138"/>
<path d="M13 10.5H24"/>
<path d="M13 26.5H24"/>
<path d="M13 42.5H24"/>
<path d="M13 58.5H24"/>
<path d="M32 74.5H43"/>
<path d="M32 90.5H43"/>
<path d="M13 106.5H24"/>
<path d="M13 122.5H24"/>
<path d="M13 138.5H24"/>
<path d="M32.5 63V90"/>
</g>
<rect x="9.5" y="6.5" width="8" height="8" fill="#f4f4f4" stroke="#9aa4b0"/>
<path d="M11 10.5h5" stroke="#3a5a9a"/>
<path d="M13.5 8v5" stroke="#3a5a9a"/>
<rect x="25.5" y="4.5" width="11" height="11" fill="#f6f6f6" stroke="#8a8a8a"/>
<path d="M28 10L30.5 13L34.5 6" stroke="#2a3a8a" stroke-width="1.6" fill="none"/>
<g transform="translate(37,2)"><circle cx="8" cy="8" r="4.5" fill="#fff" stroke="#a030d0" stroke-width="1.6"/><path d="M2 2L4.8 4.8M14 2L11.2 4.8M2 14L4.8 11.2M14 14L11.2 11.2" stroke="#222" stroke-width="1.2"/></g>
<text x="56" y="14.5" font-size="11.5" fill="#000" letter-spacing="-0.42">Point Queries</text>
<rect x="25.5" y="20.5" width="11" height="11" fill="#f6f6f6" stroke="#8a8a8a"/>
<path d="M28 26L30.5 29L34.5 22" stroke="#2a3a8a" stroke-width="1.6" fill="none"/>
<g transform="translate(37,18)"><path d="M1 5L5 1H15V11L11 15H1Z" fill="#fff" stroke="#000" stroke-width="1.1"/><path d="M1 8L11 8L15 4" stroke="#000" stroke-width=".8" fill="none"/><path d="M2 9H10V14H2Z" fill="#f03020"/><path d="M4 9H10V12Z" fill="#20c020"/><path d="M7 9L11 9L11 13Z" fill="#2060ff"/><path d="M1 5H11V15M11 5L15 1" stroke="#000" stroke-width="1.1" fill="none"/></g>
<text x="56" y="30.5" font-size="11.5" fill="#000" letter-spacing="-0.42">Field Point Grid</text>
<rect x="25.5" y="36.5" width="11" height="11" fill="#f6f6f6" stroke="#8a8a8a"/>
<g transform="translate(37,34)"><path d="M1 7Q8 17 15 7Z" fill="#f0e020"/><path d="M1 7Q8 12 15 7" stroke="#f02020" stroke-width="2" fill="none"/><path d="M3 11Q8 15 13 11" stroke="#20c020" stroke-width="1.5" fill="none"/><path d="M3 0V5M8 0V5M13 0V5" stroke="#1040e0" stroke-width="1.2"/><path d="M1.5 3.5L3 5.5L4.5 3.5M6.5 3.5L8 5.5L9.5 3.5M11.5 3.5L13 5.5L14.5 3.5" stroke="#1040e0" fill="none"/></g>
<text x="56" y="46.5" font-size="11.5" fill="#000" letter-spacing="-0.42">Deformed Contours</text>
<rect x="9.5" y="54.5" width="8" height="8" fill="#f4f4f4" stroke="#9aa4b0"/>
<path d="M11 58.5h5" stroke="#3a5a9a"/>
<rect x="25.5" y="52.5" width="11" height="11" fill="#f6f6f6" stroke="#8a8a8a"/>
<path d="M28 58L30.5 61L34.5 54" stroke="#2a3a8a" stroke-width="1.6" fill="none"/>
<g transform="translate(37,50)"><path d="M0.5 0.5H6.5V9.5H15.5V15.5H0.5Z" fill="#dde8f4" stroke="#4a6a94"/></g>
<text x="56" y="62.5" font-size="11.5" fill="#000" letter-spacing="-0.42">Loads</text>
<rect x="44.5" y="68.5" width="11" height="11" fill="#f6f6f6" stroke="#8a8a8a"/>
<path d="M47 74L49.5 77L53.5 70" stroke="#2a3a8a" stroke-width="1.6" fill="none"/>
<g transform="translate(56,66)"><path d="M0.5 0.5H6.5V9.5H15.5V15.5H0.5Z" fill="#dde8f4" stroke="#4a6a94"/></g>
<text x="75" y="78.5" font-size="11.5" fill="#000" letter-spacing="-0.42">Polygonal Load 1</text>
<rect x="44.5" y="84.5" width="11" height="11" fill="#f6f6f6" stroke="#8a8a8a"/>
<path d="M47 90L49.5 93L53.5 86" stroke="#2a3a8a" stroke-width="1.6" fill="none"/>
<g transform="translate(56,82)"><rect x="0.5" y="6.5" width="15" height="9" fill="#dde8f4" stroke="#4a6a94"/></g>
<text x="75" y="94.5" font-size="11.5" fill="#000" letter-spacing="-0.42">Rectangular Load 2</text>
<rect x="25.5" y="100.5" width="11" height="11" fill="#f6f6f6" stroke="#8a8a8a"/>
<path d="M28 106L30.5 109L34.5 102" stroke="#2a3a8a" stroke-width="1.6" fill="none"/>
<g transform="translate(37,98)"><path d="M1 5L8 1L15 5V12L8 16L1 12Z" fill="#604818"/><path d="M1 5L8 9L15 5L8 1Z" fill="#80d040"/><path d="M1 5V8L8 12L15 8V5L8 9Z" fill="#d8c040"/><path d="M1 11L8 15L15 11V12L8 16L1 12Z" fill="#202020"/></g>
<text x="56" y="110.5" font-size="11.5" fill="#000" letter-spacing="-0.42">Soil Column</text>
<rect x="9.5" y="118.5" width="8" height="8" fill="#f4f4f4" stroke="#9aa4b0"/>
<path d="M11 122.5h5" stroke="#3a5a9a"/>
<path d="M13.5 120v5" stroke="#3a5a9a"/>
<rect x="25.5" y="116.5" width="11" height="11" fill="#f6f6f6" stroke="#8a8a8a"/>
<path d="M28 122L30.5 125L34.5 118" stroke="#2a3a8a" stroke-width="1.6" fill="none"/>
<g transform="translate(37,114)"><rect x="3.5" y="0.5" width="9" height="6" fill="#f0f040" stroke="#000"/><rect x="3.5" y="6.5" width="9" height="6" fill="#20c020" stroke="#000"/><rect x="3.5" y="12.5" width="9" height="3" fill="#a08040" stroke="#000"/></g>
<text x="56" y="126.5" font-size="11.5" fill="#000" letter-spacing="-0.42">Boreholes</text>
<rect x="25.5" y="132.5" width="11" height="11" fill="#f6f6f6" stroke="#8a8a8a"/>
<g transform="translate(37,130)"><rect x="0.5" y="0.5" width="15" height="15" fill="#e8c8a0" stroke="#000"/><path d="M1 6L8 4L15 9V14H1Z" fill="#e03020"/><path d="M1 11L8 9L15 13V15H1Z" fill="#f0e020"/></g>
<text x="56" y="142.5" font-size="11.5" fill="#000" letter-spacing="-0.42">Draw Materials on all Queries</text>
</svg>


</body></html>
